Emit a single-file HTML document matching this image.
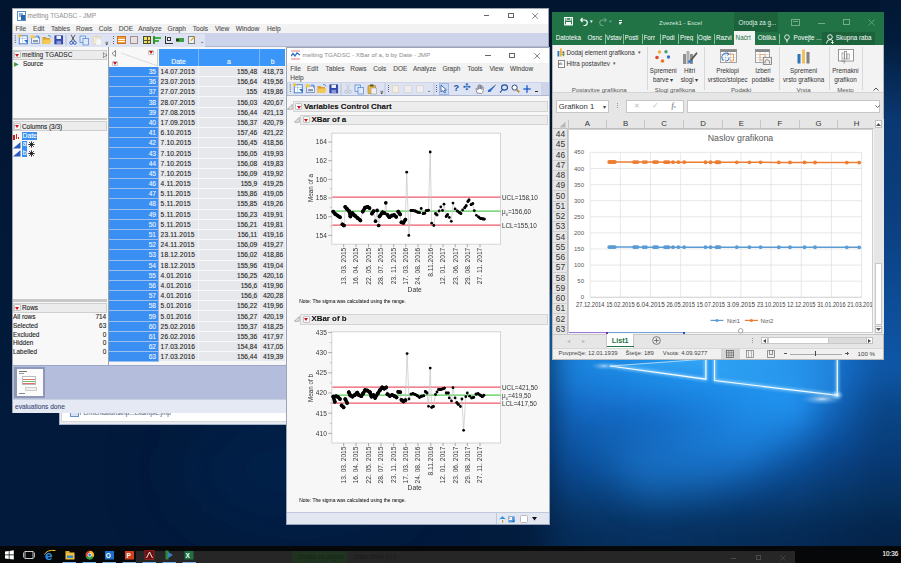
<!DOCTYPE html><html><head><meta charset="utf-8"><style>
*{box-sizing:border-box}
html,body{margin:0;padding:0;width:901px;height:563px;overflow:hidden}
body{position:relative;font-family:"Liberation Sans",sans-serif;background:#071b36}
div{line-height:1;-webkit-text-stroke:0.1px currentColor}
.ns div{-webkit-text-stroke:0}
</style></head><body><svg style="position:absolute;left:0;top:0" width="901" height="546">
<defs>
<linearGradient id="dbase" x1="0" y1="0" x2="0" y2="546" gradientUnits="userSpaceOnUse">
<stop offset="0" stop-color="#011530"/><stop offset="0.6" stop-color="#021a3a"/><stop offset="1" stop-color="#021a3c"/>
</linearGradient>
<linearGradient id="pane1" x1="0" y1="0" x2="0" y2="1"><stop offset="0" stop-color="#40b0fa"/><stop offset="1" stop-color="#2a94ec"/></linearGradient>
<linearGradient id="pane2" x1="0" y1="0" x2="1" y2="0"><stop offset="0" stop-color="#38aaf6"/><stop offset="1" stop-color="#2890e8"/></linearGradient>
<radialGradient id="flare" cx="0.5" cy="0.5" r="0.5"><stop offset="0" stop-color="#fff" stop-opacity="1"/><stop offset="0.3" stop-color="#cfeeff" stop-opacity="0.6"/><stop offset="1" stop-color="#60b8ff" stop-opacity="0"/></radialGradient>
<linearGradient id="cone" x1="842" y1="394" x2="640" y2="500" gradientUnits="userSpaceOnUse"><stop offset="0" stop-color="#2aa0ff"/><stop offset="0.4" stop-color="#1a80e0"/><stop offset="1" stop-color="#0e56a8" stop-opacity="0.6"/></linearGradient>
<filter id="blur1" x="-20%" y="-20%" width="140%" height="140%"><feGaussianBlur stdDeviation="0.6"/></filter>
<filter id="b40" x="-100%" y="-100%" width="300%" height="300%"><feGaussianBlur stdDeviation="40"/></filter>
<filter id="b20" x="-100%" y="-100%" width="300%" height="300%"><feGaussianBlur stdDeviation="18"/></filter>
<filter id="b8" x="-100%" y="-100%" width="300%" height="300%"><feGaussianBlur stdDeviation="7"/></filter>
</defs>
<rect x="0" y="0" width="901" height="546" fill="url(#dbase)"/>
<ellipse cx="300" cy="470" rx="120" ry="50" fill="#03285a" filter="url(#b40)" opacity="0.6"/>
<ellipse cx="905" cy="320" rx="40" ry="110" fill="#0e56aa" filter="url(#b20)" opacity="1"/>
</svg><div style="position:absolute;left:480px;top:290px;width:421px;height:256px;overflow:hidden"><div style="position:absolute;left:0;top:0;width:421px;height:256px;filter:blur(16px)"><div style="position:absolute;left:-19.0px;top:6.7px;width:45.0px;height:32.2px;background:#021c3e"></div><div style="position:absolute;left:25.0px;top:6.7px;width:45.0px;height:32.2px;background:#021c3e"></div><div style="position:absolute;left:69.0px;top:6.7px;width:45.0px;height:32.2px;background:#1a82dc"></div><div style="position:absolute;left:113.0px;top:6.7px;width:45.0px;height:32.2px;background:#1c8ae4"></div><div style="position:absolute;left:157.0px;top:6.7px;width:45.0px;height:32.2px;background:#1e92ec"></div><div style="position:absolute;left:201.0px;top:6.7px;width:45.0px;height:32.2px;background:#2096f0"></div><div style="position:absolute;left:245.0px;top:6.7px;width:45.0px;height:32.2px;background:#2094ee"></div><div style="position:absolute;left:289.0px;top:6.7px;width:45.0px;height:32.2px;background:#1e90ea"></div><div style="position:absolute;left:333.0px;top:6.7px;width:45.0px;height:32.2px;background:#1672cc"></div><div style="position:absolute;left:377.0px;top:6.7px;width:45.0px;height:32.2px;background:#0e56a6"></div><div style="position:absolute;left:421.0px;top:6.7px;width:45.0px;height:32.2px;background:#0e56a6"></div><div style="position:absolute;left:465.0px;top:6.7px;width:45.0px;height:32.2px;background:#0e56a6"></div><div style="position:absolute;left:-19.0px;top:37.8px;width:45.0px;height:32.2px;background:#021c3e"></div><div style="position:absolute;left:25.0px;top:37.8px;width:45.0px;height:32.2px;background:#021c3e"></div><div style="position:absolute;left:69.0px;top:37.8px;width:45.0px;height:32.2px;background:#1a82dc"></div><div style="position:absolute;left:113.0px;top:37.8px;width:45.0px;height:32.2px;background:#1c8ae4"></div><div style="position:absolute;left:157.0px;top:37.8px;width:45.0px;height:32.2px;background:#1e92ec"></div><div style="position:absolute;left:201.0px;top:37.8px;width:45.0px;height:32.2px;background:#2096f0"></div><div style="position:absolute;left:245.0px;top:37.8px;width:45.0px;height:32.2px;background:#2094ee"></div><div style="position:absolute;left:289.0px;top:37.8px;width:45.0px;height:32.2px;background:#1e90ea"></div><div style="position:absolute;left:333.0px;top:37.8px;width:45.0px;height:32.2px;background:#1672cc"></div><div style="position:absolute;left:377.0px;top:37.8px;width:45.0px;height:32.2px;background:#0e56a6"></div><div style="position:absolute;left:421.0px;top:37.8px;width:45.0px;height:32.2px;background:#0e56a6"></div><div style="position:absolute;left:465.0px;top:37.8px;width:45.0px;height:32.2px;background:#0e56a6"></div><div style="position:absolute;left:-19.0px;top:69.0px;width:45.0px;height:32.2px;background:#021c3e"></div><div style="position:absolute;left:25.0px;top:69.0px;width:45.0px;height:32.2px;background:#021c3e"></div><div style="position:absolute;left:69.0px;top:69.0px;width:45.0px;height:32.2px;background:#1a82dc"></div><div style="position:absolute;left:113.0px;top:69.0px;width:45.0px;height:32.2px;background:#1c8ae4"></div><div style="position:absolute;left:157.0px;top:69.0px;width:45.0px;height:32.2px;background:#1e92ec"></div><div style="position:absolute;left:201.0px;top:69.0px;width:45.0px;height:32.2px;background:#2096f0"></div><div style="position:absolute;left:245.0px;top:69.0px;width:45.0px;height:32.2px;background:#2094ee"></div><div style="position:absolute;left:289.0px;top:69.0px;width:45.0px;height:32.2px;background:#1e90ea"></div><div style="position:absolute;left:333.0px;top:69.0px;width:45.0px;height:32.2px;background:#1672cc"></div><div style="position:absolute;left:377.0px;top:69.0px;width:45.0px;height:32.2px;background:#0e56a6"></div><div style="position:absolute;left:421.0px;top:69.0px;width:45.0px;height:32.2px;background:#0e56a6"></div><div style="position:absolute;left:465.0px;top:69.0px;width:45.0px;height:32.2px;background:#0e56a6"></div><div style="position:absolute;left:-19.0px;top:100.2px;width:45.0px;height:32.2px;background:#021c3e"></div><div style="position:absolute;left:25.0px;top:100.2px;width:45.0px;height:32.2px;background:#021c3e"></div><div style="position:absolute;left:69.0px;top:100.2px;width:45.0px;height:32.2px;background:#1368c4"></div><div style="position:absolute;left:113.0px;top:100.2px;width:45.0px;height:32.2px;background:#156ecc"></div><div style="position:absolute;left:157.0px;top:100.2px;width:45.0px;height:32.2px;background:#1776d4"></div><div style="position:absolute;left:201.0px;top:100.2px;width:45.0px;height:32.2px;background:#1a80de"></div><div style="position:absolute;left:245.0px;top:100.2px;width:45.0px;height:32.2px;background:#1e8eea"></div><div style="position:absolute;left:289.0px;top:100.2px;width:45.0px;height:32.2px;background:#2298f6"></div><div style="position:absolute;left:333.0px;top:100.2px;width:45.0px;height:32.2px;background:#1262b8"></div><div style="position:absolute;left:377.0px;top:100.2px;width:45.0px;height:32.2px;background:#0a4686"></div><div style="position:absolute;left:421.0px;top:100.2px;width:45.0px;height:32.2px;background:#0a4686"></div><div style="position:absolute;left:465.0px;top:100.2px;width:45.0px;height:32.2px;background:#0a4686"></div><div style="position:absolute;left:-19.0px;top:131.3px;width:45.0px;height:32.2px;background:#021c3e"></div><div style="position:absolute;left:25.0px;top:131.3px;width:45.0px;height:32.2px;background:#021c3e"></div><div style="position:absolute;left:69.0px;top:131.3px;width:45.0px;height:32.2px;background:#0f5aaa"></div><div style="position:absolute;left:113.0px;top:131.3px;width:45.0px;height:32.2px;background:#105eb0"></div><div style="position:absolute;left:157.0px;top:131.3px;width:45.0px;height:32.2px;background:#1264b8"></div><div style="position:absolute;left:201.0px;top:131.3px;width:45.0px;height:32.2px;background:#146ec6"></div><div style="position:absolute;left:245.0px;top:131.3px;width:45.0px;height:32.2px;background:#1678d2"></div><div style="position:absolute;left:289.0px;top:131.3px;width:45.0px;height:32.2px;background:#126ac0"></div><div style="position:absolute;left:333.0px;top:131.3px;width:45.0px;height:32.2px;background:#0c52a0"></div><div style="position:absolute;left:377.0px;top:131.3px;width:45.0px;height:32.2px;background:#09407e"></div><div style="position:absolute;left:421.0px;top:131.3px;width:45.0px;height:32.2px;background:#09407e"></div><div style="position:absolute;left:465.0px;top:131.3px;width:45.0px;height:32.2px;background:#09407e"></div><div style="position:absolute;left:-19.0px;top:162.5px;width:45.0px;height:32.2px;background:#021c3e"></div><div style="position:absolute;left:25.0px;top:162.5px;width:45.0px;height:32.2px;background:#021c3e"></div><div style="position:absolute;left:69.0px;top:162.5px;width:45.0px;height:32.2px;background:#0b4c96"></div><div style="position:absolute;left:113.0px;top:162.5px;width:45.0px;height:32.2px;background:#0c509c"></div><div style="position:absolute;left:157.0px;top:162.5px;width:45.0px;height:32.2px;background:#0d54a2"></div><div style="position:absolute;left:201.0px;top:162.5px;width:45.0px;height:32.2px;background:#0e58a8"></div><div style="position:absolute;left:245.0px;top:162.5px;width:45.0px;height:32.2px;background:#0e56a6"></div><div style="position:absolute;left:289.0px;top:162.5px;width:45.0px;height:32.2px;background:#0c4e98"></div><div style="position:absolute;left:333.0px;top:162.5px;width:45.0px;height:32.2px;background:#093f80"></div><div style="position:absolute;left:377.0px;top:162.5px;width:45.0px;height:32.2px;background:#073670"></div><div style="position:absolute;left:421.0px;top:162.5px;width:45.0px;height:32.2px;background:#073670"></div><div style="position:absolute;left:465.0px;top:162.5px;width:45.0px;height:32.2px;background:#073670"></div><div style="position:absolute;left:-19.0px;top:193.7px;width:45.0px;height:32.2px;background:#021c3e"></div><div style="position:absolute;left:25.0px;top:193.7px;width:45.0px;height:32.2px;background:#021c3e"></div><div style="position:absolute;left:69.0px;top:193.7px;width:45.0px;height:32.2px;background:#083c74"></div><div style="position:absolute;left:113.0px;top:193.7px;width:45.0px;height:32.2px;background:#09407a"></div><div style="position:absolute;left:157.0px;top:193.7px;width:45.0px;height:32.2px;background:#0a4480"></div><div style="position:absolute;left:201.0px;top:193.7px;width:45.0px;height:32.2px;background:#0a4480"></div><div style="position:absolute;left:245.0px;top:193.7px;width:45.0px;height:32.2px;background:#09407a"></div><div style="position:absolute;left:289.0px;top:193.7px;width:45.0px;height:32.2px;background:#083c74"></div><div style="position:absolute;left:333.0px;top:193.7px;width:45.0px;height:32.2px;background:#063666"></div><div style="position:absolute;left:377.0px;top:193.7px;width:45.0px;height:32.2px;background:#05305c"></div><div style="position:absolute;left:421.0px;top:193.7px;width:45.0px;height:32.2px;background:#05305c"></div><div style="position:absolute;left:465.0px;top:193.7px;width:45.0px;height:32.2px;background:#05305c"></div><div style="position:absolute;left:-19.0px;top:224.8px;width:45.0px;height:32.2px;background:#021c3e"></div><div style="position:absolute;left:25.0px;top:224.8px;width:45.0px;height:32.2px;background:#021c3e"></div><div style="position:absolute;left:69.0px;top:224.8px;width:45.0px;height:32.2px;background:#052c58"></div><div style="position:absolute;left:113.0px;top:224.8px;width:45.0px;height:32.2px;background:#062e5c"></div><div style="position:absolute;left:157.0px;top:224.8px;width:45.0px;height:32.2px;background:#06305e"></div><div style="position:absolute;left:201.0px;top:224.8px;width:45.0px;height:32.2px;background:#062e5c"></div><div style="position:absolute;left:245.0px;top:224.8px;width:45.0px;height:32.2px;background:#052c58"></div><div style="position:absolute;left:289.0px;top:224.8px;width:45.0px;height:32.2px;background:#052a54"></div><div style="position:absolute;left:333.0px;top:224.8px;width:45.0px;height:32.2px;background:#042650"></div><div style="position:absolute;left:377.0px;top:224.8px;width:45.0px;height:32.2px;background:#04234a"></div><div style="position:absolute;left:421.0px;top:224.8px;width:45.0px;height:32.2px;background:#04234a"></div><div style="position:absolute;left:465.0px;top:224.8px;width:45.0px;height:32.2px;background:#04234a"></div><div style="position:absolute;left:-19.0px;top:256.0px;width:45.0px;height:32.2px;background:#021c3e"></div><div style="position:absolute;left:25.0px;top:256.0px;width:45.0px;height:32.2px;background:#021c3e"></div><div style="position:absolute;left:69.0px;top:256.0px;width:45.0px;height:32.2px;background:#052c58"></div><div style="position:absolute;left:113.0px;top:256.0px;width:45.0px;height:32.2px;background:#062e5c"></div><div style="position:absolute;left:157.0px;top:256.0px;width:45.0px;height:32.2px;background:#06305e"></div><div style="position:absolute;left:201.0px;top:256.0px;width:45.0px;height:32.2px;background:#062e5c"></div><div style="position:absolute;left:245.0px;top:256.0px;width:45.0px;height:32.2px;background:#052c58"></div><div style="position:absolute;left:289.0px;top:256.0px;width:45.0px;height:32.2px;background:#052a54"></div><div style="position:absolute;left:333.0px;top:256.0px;width:45.0px;height:32.2px;background:#042650"></div><div style="position:absolute;left:377.0px;top:256.0px;width:45.0px;height:32.2px;background:#04234a"></div><div style="position:absolute;left:421.0px;top:256.0px;width:45.0px;height:32.2px;background:#04234a"></div><div style="position:absolute;left:465.0px;top:256.0px;width:45.0px;height:32.2px;background:#04234a"></div><div style="position:absolute;left:-19.0px;top:287.2px;width:45.0px;height:32.2px;background:#021c3e"></div><div style="position:absolute;left:25.0px;top:287.2px;width:45.0px;height:32.2px;background:#021c3e"></div><div style="position:absolute;left:69.0px;top:287.2px;width:45.0px;height:32.2px;background:#052c58"></div><div style="position:absolute;left:113.0px;top:287.2px;width:45.0px;height:32.2px;background:#062e5c"></div><div style="position:absolute;left:157.0px;top:287.2px;width:45.0px;height:32.2px;background:#06305e"></div><div style="position:absolute;left:201.0px;top:287.2px;width:45.0px;height:32.2px;background:#062e5c"></div><div style="position:absolute;left:245.0px;top:287.2px;width:45.0px;height:32.2px;background:#052c58"></div><div style="position:absolute;left:289.0px;top:287.2px;width:45.0px;height:32.2px;background:#052a54"></div><div style="position:absolute;left:333.0px;top:287.2px;width:45.0px;height:32.2px;background:#042650"></div><div style="position:absolute;left:377.0px;top:287.2px;width:45.0px;height:32.2px;background:#04234a"></div><div style="position:absolute;left:421.0px;top:287.2px;width:45.0px;height:32.2px;background:#04234a"></div><div style="position:absolute;left:465.0px;top:287.2px;width:45.0px;height:32.2px;background:#04234a"></div></div></div><svg style="position:absolute;left:0;top:0" width="901" height="546">
<defs>
<linearGradient id="pane1" x1="0" y1="0" x2="0" y2="1"><stop offset="0" stop-color="#40b0fa"/><stop offset="1" stop-color="#2a94ec"/></linearGradient>
<linearGradient id="pane2" x1="0" y1="0" x2="1" y2="0"><stop offset="0" stop-color="#38aaf6"/><stop offset="1" stop-color="#2890e8"/></linearGradient>
<radialGradient id="flare" cx="0.5" cy="0.5" r="0.5"><stop offset="0" stop-color="#fff" stop-opacity="1"/><stop offset="0.3" stop-color="#cfeeff" stop-opacity="0.6"/><stop offset="1" stop-color="#60b8ff" stop-opacity="0"/></radialGradient>
<filter id="b3b" x="-20%" y="-20%" width="140%" height="140%"><feGaussianBlur stdDeviation="1.5"/></filter>
<filter id="blur1b" x="-20%" y="-20%" width="140%" height="140%"><feGaussianBlur stdDeviation="0.6"/></filter>
<filter id="b20b" x="-100%" y="-100%" width="300%" height="300%"><feGaussianBlur stdDeviation="18"/></filter>
</defs>
<polygon points="842,394 600,450 640,500 740,480" fill="#2a9af8" filter="url(#b20b)" opacity="0.35"/>
<polygon points="610,366 706,359 706,379.2" fill="url(#pane1)" opacity="0.6"/>
<polygon points="714.5,359 837.3,359 837.3,395.4 714.5,380.5" fill="url(#pane2)" opacity="0.55"/>
<g filter="url(#b3b)" stroke="#9ad8ff" fill="none" opacity="0.7">
<polyline points="610,366 705.9,379.2 705.9,359" stroke-width="3.5"/>
<polyline points="714.5,359 714.5,380.5 837.3,395.4 837.3,359" stroke-width="3.5"/>
</g>
<g filter="url(#blur1b)" stroke="#f4fbff" fill="none">
<polyline points="610,366 705.9,379.2 705.9,359" stroke-width="1.2"/>
<line x1="610" y1="366" x2="700" y2="359.5" stroke-width="0.8" opacity="0.8"/>
<polyline points="714.5,359 714.5,380.5 837.3,395.4 837.3,359" stroke-width="1.2"/>
</g>
<ellipse cx="822" cy="399" rx="22" ry="6" fill="url(#flare)" opacity="0.75"/>
<ellipse cx="837" cy="395" rx="7" ry="5" fill="url(#flare)"/>
<ellipse cx="604" cy="366" rx="14" ry="4.5" fill="url(#flare)" opacity="0.6"/>
</svg><div style="position:absolute;left:880px;top:0px;width:21px;height:362px;background:linear-gradient(to bottom,#021834 0px,#031c3c 40px,#0a3872 120px,#0b3f80 220px,#0d4c96 300px,#0e56a6 362px)"></div><div style="position:absolute;left:0px;top:546px;width:901px;height:17px;background:#060708"></div><div style="position:absolute;left:135.5px;top:551px;width:659.5px;height:12px;background:#262626"></div><div style="position:absolute;left:292px;top:551px;width:55px;height:12px;background:#1f3320"></div><div style="position:absolute;left:297px;top:554.3px;white-space:nowrap;font-size:6.3px;color:#172a18">Orodja za pogon</div><div style="position:absolute;left:354px;top:553.8px;white-space:nowrap;font-size:6.5px;color:#1c1c1c">User drive (U:)</div><div style="position:absolute;left:730.5px;top:557.5px;width:5.5px;height:0.7px;background:#4a4a4a"></div><div style="position:absolute;left:755.5px;top:554.5px;width:5.5px;height:5.5px;border:0.7px solid #4a4a4a"></div><svg style="position:absolute;left:780px;top:554.5px" width="6" height="6"><path d="M0.3 0.3 L5.7 5.7 M5.7 0.3 L0.3 5.7" stroke="#4a4a4a" stroke-width="0.7"/></svg><div style="position:absolute;left:796px;top:553px;white-space:nowrap;"></div><div style="position:absolute;left:882.5px;top:551.3px;white-space:nowrap;color:#fff;font-size:6.3px">10:36</div><svg style="position:absolute;left:0;top:546px" width="220" height="17"><g fill="#fff"><polygon points="5,5.6 8.8,5 8.8,8.6 5,8.6"/><polygon points="9.5,4.9 13.8,4.2 13.8,8.6 9.5,8.6"/><polygon points="5,9.3 8.8,9.3 8.8,12.9 5,12.4"/><polygon points="9.5,9.3 13.8,9.3 13.8,13.6 9.5,13"/></g><rect x="25" y="5.5" width="8" height="7" fill="none" stroke="#ddd" stroke-width="0.9"/><line x1="23.5" y1="6.5" x2="23.5" y2="11.5" stroke="#ddd" stroke-width="0.8"/><line x1="34.5" y1="6.5" x2="34.5" y2="11.5" stroke="#ddd" stroke-width="0.8"/><text x="45" y="14" font-size="13.5" font-weight="bold" fill="#2a8ee8" font-family="Liberation Sans">e</text><path d="M44.5 8.5 Q47 3.5 55.5 4.5" fill="none" stroke="#f0c030" stroke-width="1"/><rect x="65.5" y="6.5" width="9" height="7" fill="#f0c040"/><rect x="65.5" y="5" width="4" height="2" fill="#e0a820"/><rect x="67" y="9.5" width="6" height="2.5" fill="#3a8ad0"/><circle cx="89.7" cy="9" r="4.2" fill="#e04030"/><path d="M89.7 9 L85.8 11 A4.2 4.2 0 0 0 93.6 11 Z" fill="#30a040"/><path d="M89.7 9 L93.6 11 A4.2 4.2 0 0 0 89.7 4.8 Z" fill="#f0c020"/><circle cx="89.7" cy="9" r="1.8" fill="#3a80e0" stroke="#fff" stroke-width="0.7"/><rect x="105" y="5" width="9" height="8.5" fill="#1a70c8"/><text x="105.8" y="12" font-size="6.5" font-weight="bold" fill="#fff" font-family="Liberation Sans">O</text><rect x="125" y="5" width="9" height="8.5" fill="#d04020"/><text x="126.5" y="12" font-size="6.5" font-weight="bold" fill="#fff" font-family="Liberation Sans">P</text><rect x="145" y="4.5" width="9" height="9" fill="#6a1010" stroke="#c02020" stroke-width="0.6"/><path d="M146.5 12 L149.5 6 L152.5 12" fill="none" stroke="#fff" stroke-width="0.9"/><rect x="165.5" y="4.5" width="3" height="9" fill="#2a8a40"/><polygon points="168,6 173,9 168,12" fill="#3a80c0"/><rect x="184.5" y="5" width="9" height="8.5" fill="#1e7145"/><text x="185.5" y="12" font-size="6.5" font-weight="bold" fill="#fff" font-family="Liberation Sans">X</text><rect x="62.5" y="16" width="13.5" height="1" fill="#7ab4e8"/><rect x="82.5" y="16" width="13.5" height="1" fill="#7ab4e8"/><rect x="102.5" y="16" width="13.5" height="1" fill="#7ab4e8"/><rect x="122.5" y="16" width="13.5" height="1" fill="#7ab4e8"/><rect x="142.5" y="16" width="13.5" height="1" fill="#7ab4e8"/><rect x="162.5" y="16" width="13.5" height="1" fill="#7ab4e8"/><rect x="182.5" y="16" width="13.5" height="1" fill="#7ab4e8"/></svg><div style="position:absolute;left:59px;top:380px;width:240px;height:45px;background:#e8ecf2;border:0.8px solid #a8b4c8"></div><div style="position:absolute;left:61px;top:380px;width:226px;height:42.3px;background:#fff;border:0.7px solid #d8d8d8"></div><div style="position:absolute;left:69.6px;top:410px;width:9px;height:6.5px;background:#d8e4f4;border:0.7px solid #6a90c8"></div><div style="position:absolute;left:79.5px;top:410px;white-space:nowrap;font-size:6.4px;color:#5a6a88">Fermentationstrip...example.jmp</div><div style="position:absolute;left:12px;top:8px;width:537px;height:405.3px;background:#f5f5f5;border:1px solid #a0a6b0"></div><div style="position:absolute;left:13px;top:9px;width:535px;height:16px;background:#ffffff"></div><div style="position:absolute;left:16.5px;top:11px;width:9px;height:10px;background:#fff;border:1px solid #5a8fc8"><div style="position:absolute;left:1px;top:1px;width:4px;height:4px;background:#8ab4e0"></div><div style="position:absolute;left:3px;top:3px;width:4px;height:5px;background:#2a66b0"></div></div><div style="position:absolute;left:27.5px;top:12.6px;white-space:nowrap;font-size:6.5px;color:#9a9a9a">melting TGADSC - JMP</div><div style="position:absolute;left:483.8px;top:15.3px;width:5.4px;height:0.8px;background:#666"></div><div style="position:absolute;left:507.8px;top:12.8px;width:6px;height:5.6px;border:0.8px solid #666"></div><svg style="position:absolute;left:532.3px;top:12.8px" width="6.2" height="6"><path d="M0.3 0.3 L5.9 5.7 M5.9 0.3 L0.3 5.7" stroke="#666" stroke-width="0.8"/></svg><div style="position:absolute;left:13px;top:24px;width:535px;height:9px;background:#f2f2f2"></div><div style="position:absolute;left:15.5px;top:25.8px;white-space:nowrap;font-size:6.6px;color:#505050">File</div><div style="position:absolute;left:33px;top:25.8px;white-space:nowrap;font-size:6.6px;color:#505050">Edit</div><div style="position:absolute;left:51px;top:25.8px;white-space:nowrap;font-size:6.6px;color:#505050">Tables</div><div style="position:absolute;left:76px;top:25.8px;white-space:nowrap;font-size:6.6px;color:#505050">Rows</div><div style="position:absolute;left:98.8px;top:25.8px;white-space:nowrap;font-size:6.6px;color:#505050">Cols</div><div style="position:absolute;left:118.8px;top:25.8px;white-space:nowrap;font-size:6.6px;color:#505050">DOE</div><div style="position:absolute;left:138.3px;top:25.8px;white-space:nowrap;font-size:6.6px;color:#505050">Analyze</div><div style="position:absolute;left:167.6px;top:25.8px;white-space:nowrap;font-size:6.6px;color:#505050">Graph</div><div style="position:absolute;left:192.7px;top:25.8px;white-space:nowrap;font-size:6.6px;color:#505050">Tools</div><div style="position:absolute;left:215px;top:25.8px;white-space:nowrap;font-size:6.6px;color:#505050">View</div><div style="position:absolute;left:235.8px;top:25.8px;white-space:nowrap;font-size:6.6px;color:#505050">Window</div><div style="position:absolute;left:267px;top:25.8px;white-space:nowrap;font-size:6.6px;color:#505050">Help</div><div style="position:absolute;left:13px;top:33px;width:535px;height:14px;background:#cdd4ea;border-bottom:1px solid #b0b8d0"></div><div style="position:absolute;left:13px;top:33.5px;width:191.5px;height:13px;background:#dde3f2"></div><svg style="position:absolute;left:12px;top:32px" width="100" height="16"><rect x="2.8" y="3.3" width="1" height="1" fill="#505868"/><rect x="2.8" y="5.5" width="1" height="1" fill="#505868"/><rect x="2.8" y="7.7" width="1" height="1" fill="#505868"/><rect x="2.8" y="9.9" width="1" height="1" fill="#505868"/><rect x="7.3" y="3.8" width="8" height="8" fill="#fff" stroke="#3a78c8" stroke-width="0.9"/><line x1="7.3" y1="6.5" x2="15.3" y2="6.5" stroke="#8ab0e0" stroke-width="0.5"/><line x1="10.5" y1="3.8" x2="10.5" y2="11.8" stroke="#8ab0e0" stroke-width="0.5"/><circle cx="7.8" cy="3.8" r="1.6" fill="#f0c030"/><polygon points="12,8 15.8,8 15.8,11.8" fill="#2a70c8"/><rect x="19.5" y="5" width="8" height="6.5" fill="#eef2f8" stroke="#6a8ab8" stroke-width="0.8"/><rect x="18.5" y="3.3" width="4" height="3" fill="#f0c850"/><rect x="21" y="8" width="5" height="2.2" fill="#8898b0"/><path d="M24 4 L26.5 4 L26.5 6.5" fill="none" stroke="#2a8ad8" stroke-width="0.8"/><path d="M30.5 5 L33.5 5 L34.5 6 L38 6 L38 12 L30.5 12 Z" fill="#d8a030"/><path d="M31.5 7.5 L39.5 7.5 L38 12 L30.5 12 Z" fill="#f5c850"/><path d="M36 3.5 Q38.5 3 39 5.5" fill="none" stroke="#3a78c8" stroke-width="0.7"/><rect x="42.8" y="3.8" width="8" height="8.2" fill="#3048b0" stroke="#202c80" stroke-width="0.5"/><rect x="44.5" y="3.8" width="4.5" height="3.2" fill="#e8eef8"/><rect x="44.5" y="8.8" width="4.6" height="3.2" fill="#8a98d8"/><line x1="54" y1="2.5" x2="54" y2="13.5" stroke="#a8b0c4" stroke-width="0.8"/><line x1="59" y1="2.8" x2="62.5" y2="9" stroke="#333" stroke-width="0.8"/><line x1="63" y1="2.8" x2="59.5" y2="9" stroke="#333" stroke-width="0.8"/><circle cx="59.2" cy="10.8" r="1.5" fill="none" stroke="#2a58b8" stroke-width="0.9"/><circle cx="62.8" cy="10.8" r="1.5" fill="none" stroke="#2a58b8" stroke-width="0.9"/><rect x="68" y="4" width="5.5" height="6.5" fill="#dfe9f8" stroke="#4a80d0" stroke-width="0.7"/><rect x="71" y="6.5" width="5.5" height="6.5" fill="#dfe9f8" stroke="#4a80d0" stroke-width="0.7"/><rect x="81" y="4.5" width="7.5" height="8" rx="0.6" fill="#f2ead8" stroke="#d8ccb0" stroke-width="0.6"/><rect x="83" y="3.5" width="3.5" height="2" fill="#e0d8c4"/><rect x="84" y="7" width="5.5" height="6" fill="#f8f8f8" stroke="#dcdcdc" stroke-width="0.5"/><line x1="93.3" y1="10.3" x2="96.3" y2="10.3" stroke="#333" stroke-width="0.6"/><polygon points="93.3,11.5 96.3,11.5 94.8,13.3" fill="#333"/></svg><div style="position:absolute;left:113px;top:36.0px;width:1px;height:1px;background:#5a6070"></div><div style="position:absolute;left:113px;top:38.3px;width:1px;height:1px;background:#5a6070"></div><div style="position:absolute;left:113px;top:40.6px;width:1px;height:1px;background:#5a6070"></div><div style="position:absolute;left:113px;top:42.9px;width:1px;height:1px;background:#5a6070"></div><div style="position:absolute;left:117px;top:36px;width:9px;height:8px;background:#f4a040;border:1px solid #d07020"></div><div style="position:absolute;left:118px;top:38.5px;width:7px;height:1px;background:#fff;"></div><div style="position:absolute;left:118px;top:40.5px;width:7px;height:1px;background:#fff;"></div><div style="position:absolute;left:130px;top:36px;width:8px;height:8px;background:#e8e0e0;border:1px solid #a09090"></div><div style="position:absolute;left:143px;top:36px;width:8px;height:8px;background:#f0e060;border:1px solid #505030"></div><div style="position:absolute;left:146.5px;top:36px;width:1px;height:8px;background:#505030;"></div><div style="position:absolute;left:143px;top:39.5px;width:8px;height:1px;background:#505030;"></div><div style="position:absolute;left:153px;top:36px;width:2px;height:8px;background:#3a9030;"></div><div style="position:absolute;left:155px;top:37px;width:6px;height:2px;background:#40b040;"></div><div style="position:absolute;left:155px;top:40px;width:4px;height:2px;background:#40b040;"></div><div style="position:absolute;left:165px;top:35.5px;width:1px;height:8px;background:#333;"></div><div style="position:absolute;left:165px;top:43px;width:8px;height:1px;background:#333;"></div><div style="position:absolute;left:167px;top:37px;width:4px;height:4px;background:#fff;border:1px solid #333"></div><div style="position:absolute;left:176px;top:37.5px;width:8px;height:4px;background:#40a040;"></div><div style="position:absolute;left:176px;top:38.5px;width:3px;height:2px;background:#333;"></div><div style="position:absolute;left:188px;top:36px;width:7px;height:8px;background:#f0f0f0;border:1px solid #808080"></div><div style="position:absolute;left:190px;top:38px;width:6px;height:1.2px;background:#e0a020;transform:rotate(-45deg)"></div><div style="position:absolute;left:200px;top:39px;white-space:nowrap;font-size:5px;color:#333">&#x2304;</div><div style="position:absolute;left:13px;top:47px;width:95px;height:318px;background:#f8f8f8"></div><div style="position:absolute;left:107.5px;top:47px;width:1.2px;height:318px;background:#a0a0a0"></div><div style="position:absolute;left:13px;top:49.5px;width:94px;height:10.5px;background:#ececec;border:0.7px solid #cfcfcf"></div><div style="position:absolute;left:13.8px;top:51.3px;width:7px;height:7px;background:#fbfbfb;border:0.6px solid #c4c4c4;border-radius:1px"><div style="position:absolute;left:0.3999999999999999px;top:1.5px;width:0;height:0;border-left:2.6px solid transparent;border-right:2.6px solid transparent;border-top:3.1px solid #d0101a"></div></div><div style="position:absolute;left:22px;top:51.8px;white-space:nowrap;font-size:6.6px;color:#222;-webkit-text-stroke:0.05px #222">melting TGADSC</div><div style="position:absolute;left:102.2px;top:50.8px;white-space:nowrap;font-size:7.2px;color:#444;transform:scaleX(0.8)">&#x25B7;</div><div style="position:absolute;left:14px;top:60.8px;white-space:nowrap;font-size:6.2px;color:#3a9a3a">&#x25B6;</div><div style="position:absolute;left:23px;top:61.4px;white-space:nowrap;font-size:6.4px;color:#222">Source</div><div style="position:absolute;left:13px;top:118.3px;width:94px;height:2.2px;background:#c8c8c8"></div><div style="position:absolute;left:13px;top:120.5px;width:94px;height:10.6px;background:#ececec;border:0.7px solid #cfcfcf"></div><div style="position:absolute;left:13.8px;top:122.5px;width:7px;height:7px;background:#fbfbfb;border:0.6px solid #c4c4c4;border-radius:1px"><div style="position:absolute;left:0.3999999999999999px;top:1.5px;width:0;height:0;border-left:2.6px solid transparent;border-right:2.6px solid transparent;border-top:3.1px solid #d0101a"></div></div><div style="position:absolute;left:22px;top:123.5px;white-space:nowrap;font-size:6.4px;color:#222">Columns (3/3)</div><div style="position:absolute;left:13.3px;top:135px;width:1.7px;height:4.5px;background:#d42020"></div><div style="position:absolute;left:15.5px;top:133.6px;width:1.7px;height:5.9px;background:#d42020"></div><div style="position:absolute;left:17.7px;top:137.4px;width:1.7px;height:2.1px;background:#d42020"></div><div style="position:absolute;left:22px;top:132.4px;width:14.6px;height:7.6px;background:#3a8ef0"></div><div style="position:absolute;left:22.6px;top:133.2px;white-space:nowrap;font-size:6.7px;color:#fff">Date</div><svg style="position:absolute;left:13px;top:141.6px" width="8" height="7"><polygon points="0,6.5 7.5,0 7.5,6.5" fill="#2a5cc0"/></svg><div style="position:absolute;left:22px;top:140.6px;width:5px;height:8px;background:#3a8ef0"></div><div style="position:absolute;left:22.8px;top:141.4px;white-space:nowrap;font-size:6.7px;color:#fff">a</div><svg style="position:absolute;left:28px;top:141.4px" width="7" height="7"><g stroke="#111" stroke-width="0.85"><line x1="3.5" y1="0.3" x2="3.5" y2="6.7"/><line x1="0.3" y1="3.5" x2="6.7" y2="3.5"/><line x1="1.2" y1="1.2" x2="5.8" y2="5.8"/><line x1="5.8" y1="1.2" x2="1.2" y2="5.8"/></g></svg><svg style="position:absolute;left:13px;top:149.8px" width="8" height="7"><polygon points="0,6.5 7.5,0 7.5,6.5" fill="#2a5cc0"/></svg><div style="position:absolute;left:22px;top:148.8px;width:5px;height:8px;background:#3a8ef0"></div><div style="position:absolute;left:22.8px;top:149.60000000000002px;white-space:nowrap;font-size:6.7px;color:#fff">b</div><svg style="position:absolute;left:28px;top:149.60000000000002px" width="7" height="7"><g stroke="#111" stroke-width="0.85"><line x1="3.5" y1="0.3" x2="3.5" y2="6.7"/><line x1="0.3" y1="3.5" x2="6.7" y2="3.5"/><line x1="1.2" y1="1.2" x2="5.8" y2="5.8"/><line x1="5.8" y1="1.2" x2="1.2" y2="5.8"/></g></svg><div style="position:absolute;left:13px;top:298.8px;width:94px;height:3.7px;background:#c8c8c8"></div><div style="position:absolute;left:13px;top:302.5px;width:94px;height:10.2px;background:#ececec;border:0.7px solid #cfcfcf"></div><div style="position:absolute;left:13.8px;top:304px;width:7px;height:7px;background:#fbfbfb;border:0.6px solid #c4c4c4;border-radius:1px"><div style="position:absolute;left:0.3999999999999999px;top:1.5px;width:0;height:0;border-left:2.6px solid transparent;border-right:2.6px solid transparent;border-top:3.1px solid #d0101a"></div></div><div style="position:absolute;left:22px;top:305.2px;white-space:nowrap;font-size:6.4px;color:#222">Rows</div><div style="position:absolute;left:13px;top:314.4px;white-space:nowrap;font-size:6.4px;color:#222">All rows</div><div style="position:absolute;left:80px;top:314.4px;white-space:nowrap;font-size:6.4px;color:#222;width:26.2px;text-align:right">714</div><div style="position:absolute;left:13px;top:323.0px;white-space:nowrap;font-size:6.4px;color:#222">Selected</div><div style="position:absolute;left:80px;top:323.0px;white-space:nowrap;font-size:6.4px;color:#222;width:26.2px;text-align:right">63</div><div style="position:absolute;left:13px;top:331.59999999999997px;white-space:nowrap;font-size:6.4px;color:#222">Excluded</div><div style="position:absolute;left:80px;top:331.59999999999997px;white-space:nowrap;font-size:6.4px;color:#222;width:26.2px;text-align:right">0</div><div style="position:absolute;left:13px;top:340.2px;white-space:nowrap;font-size:6.4px;color:#222">Hidden</div><div style="position:absolute;left:80px;top:340.2px;white-space:nowrap;font-size:6.4px;color:#222;width:26.2px;text-align:right">0</div><div style="position:absolute;left:13px;top:348.79999999999995px;white-space:nowrap;font-size:6.4px;color:#222">Labelled</div><div style="position:absolute;left:80px;top:348.79999999999995px;white-space:nowrap;font-size:6.4px;color:#222;width:26.2px;text-align:right">0</div><div style="position:absolute;left:108.7px;top:47px;width:178.3px;height:318px;background:#f6f6f6"></div><div style="position:absolute;left:108.7px;top:48.9px;width:49.7px;height:17.2px;background:#f8f8f8;border-right:0.7px solid #ccc"></div><svg style="position:absolute;left:108.7px;top:48.9px" width="50" height="18"><line x1="12" y1="4" x2="49" y2="17" stroke="#c8c8c8" stroke-width="0.6"/><polygon points="6.5,1.5 3,4.5 6.5,7.5" fill="#fff" stroke="#555" stroke-width="0.7"/></svg><div style="position:absolute;left:111.8px;top:60.5px;width:6.5px;height:5.5px;background:#fbfbfb;border:0.6px solid #c4c4c4;border-radius:1px"><div style="position:absolute;left:0.1499999999999999px;top:0.75px;width:0;height:0;border-left:2.6px solid transparent;border-right:2.6px solid transparent;border-top:3.1px solid #d0101a"></div></div><div style="position:absolute;left:147.5px;top:49.5px;width:6.5px;height:5.5px;background:#fbfbfb;border:0.6px solid #c4c4c4;border-radius:1px"><div style="position:absolute;left:0.1499999999999999px;top:0.75px;width:0;height:0;border-left:2.6px solid transparent;border-right:2.6px solid transparent;border-top:3.1px solid #d0101a"></div></div><div style="position:absolute;left:158.8px;top:48.9px;width:126.7px;height:17.2px;background:#3a96f8"></div><div style="position:absolute;left:198.1px;top:48.9px;width:0.6px;height:17.2px;background:#7ab8ff"></div><div style="position:absolute;left:259.2px;top:48.9px;width:0.6px;height:17.2px;background:#7ab8ff"></div><div style="position:absolute;left:158.8px;top:59px;white-space:nowrap;font-size:6.9px;color:#fff;width:39.3px;text-align:center">Date</div><div style="position:absolute;left:198.7px;top:59px;white-space:nowrap;font-size:6.9px;color:#fff;width:60.5px;text-align:center">a</div><div style="position:absolute;left:259.8px;top:59px;white-space:nowrap;font-size:6.9px;color:#fff;width:25.7px;text-align:center">b</div><div style="position:absolute;left:108.7px;top:66.5px;width:49.7px;height:294.51px;background:#3b8ff2"></div><div style="position:absolute;left:158.8px;top:66.5px;width:126.7px;height:294.51px;background:#e6e8ec"></div><div style="position:absolute;left:108.7px;top:76px;width:49.7px;height:1px;background:#9cc0ee"></div><div style="position:absolute;left:158.8px;top:76px;width:126.7px;height:1px;background:#f7f8fa"></div><div style="position:absolute;left:108.7px;top:86px;width:49.7px;height:1px;background:#9cc0ee"></div><div style="position:absolute;left:158.8px;top:86px;width:126.7px;height:1px;background:#f7f8fa"></div><div style="position:absolute;left:108.7px;top:96px;width:49.7px;height:1px;background:#9cc0ee"></div><div style="position:absolute;left:158.8px;top:96px;width:126.7px;height:1px;background:#f7f8fa"></div><div style="position:absolute;left:108.7px;top:107px;width:49.7px;height:1px;background:#9cc0ee"></div><div style="position:absolute;left:158.8px;top:107px;width:126.7px;height:1px;background:#f7f8fa"></div><div style="position:absolute;left:108.7px;top:117px;width:49.7px;height:1px;background:#9cc0ee"></div><div style="position:absolute;left:158.8px;top:117px;width:126.7px;height:1px;background:#f7f8fa"></div><div style="position:absolute;left:108.7px;top:127px;width:49.7px;height:1px;background:#9cc0ee"></div><div style="position:absolute;left:158.8px;top:127px;width:126.7px;height:1px;background:#f7f8fa"></div><div style="position:absolute;left:108.7px;top:137px;width:49.7px;height:1px;background:#9cc0ee"></div><div style="position:absolute;left:158.8px;top:137px;width:126.7px;height:1px;background:#f7f8fa"></div><div style="position:absolute;left:108.7px;top:147px;width:49.7px;height:1px;background:#9cc0ee"></div><div style="position:absolute;left:158.8px;top:147px;width:126.7px;height:1px;background:#f7f8fa"></div><div style="position:absolute;left:108.7px;top:158px;width:49.7px;height:1px;background:#9cc0ee"></div><div style="position:absolute;left:158.8px;top:158px;width:126.7px;height:1px;background:#f7f8fa"></div><div style="position:absolute;left:108.7px;top:168px;width:49.7px;height:1px;background:#9cc0ee"></div><div style="position:absolute;left:158.8px;top:168px;width:126.7px;height:1px;background:#f7f8fa"></div><div style="position:absolute;left:108.7px;top:178px;width:49.7px;height:1px;background:#9cc0ee"></div><div style="position:absolute;left:158.8px;top:178px;width:126.7px;height:1px;background:#f7f8fa"></div><div style="position:absolute;left:108.7px;top:188px;width:49.7px;height:1px;background:#9cc0ee"></div><div style="position:absolute;left:158.8px;top:188px;width:126.7px;height:1px;background:#f7f8fa"></div><div style="position:absolute;left:108.7px;top:198px;width:49.7px;height:1px;background:#9cc0ee"></div><div style="position:absolute;left:158.8px;top:198px;width:126.7px;height:1px;background:#f7f8fa"></div><div style="position:absolute;left:108.7px;top:209px;width:49.7px;height:1px;background:#9cc0ee"></div><div style="position:absolute;left:158.8px;top:209px;width:126.7px;height:1px;background:#f7f8fa"></div><div style="position:absolute;left:108.7px;top:219px;width:49.7px;height:1px;background:#9cc0ee"></div><div style="position:absolute;left:158.8px;top:219px;width:126.7px;height:1px;background:#f7f8fa"></div><div style="position:absolute;left:108.7px;top:229px;width:49.7px;height:1px;background:#9cc0ee"></div><div style="position:absolute;left:158.8px;top:229px;width:126.7px;height:1px;background:#f7f8fa"></div><div style="position:absolute;left:108.7px;top:239px;width:49.7px;height:1px;background:#9cc0ee"></div><div style="position:absolute;left:158.8px;top:239px;width:126.7px;height:1px;background:#f7f8fa"></div><div style="position:absolute;left:108.7px;top:249px;width:49.7px;height:1px;background:#9cc0ee"></div><div style="position:absolute;left:158.8px;top:249px;width:126.7px;height:1px;background:#f7f8fa"></div><div style="position:absolute;left:108.7px;top:260px;width:49.7px;height:1px;background:#9cc0ee"></div><div style="position:absolute;left:158.8px;top:260px;width:126.7px;height:1px;background:#f7f8fa"></div><div style="position:absolute;left:108.7px;top:270px;width:49.7px;height:1px;background:#9cc0ee"></div><div style="position:absolute;left:158.8px;top:270px;width:126.7px;height:1px;background:#f7f8fa"></div><div style="position:absolute;left:108.7px;top:280px;width:49.7px;height:1px;background:#9cc0ee"></div><div style="position:absolute;left:158.8px;top:280px;width:126.7px;height:1px;background:#f7f8fa"></div><div style="position:absolute;left:108.7px;top:290px;width:49.7px;height:1px;background:#9cc0ee"></div><div style="position:absolute;left:158.8px;top:290px;width:126.7px;height:1px;background:#f7f8fa"></div><div style="position:absolute;left:108.7px;top:300px;width:49.7px;height:1px;background:#9cc0ee"></div><div style="position:absolute;left:158.8px;top:300px;width:126.7px;height:1px;background:#f7f8fa"></div><div style="position:absolute;left:108.7px;top:310px;width:49.7px;height:1px;background:#9cc0ee"></div><div style="position:absolute;left:158.8px;top:310px;width:126.7px;height:1px;background:#f7f8fa"></div><div style="position:absolute;left:108.7px;top:321px;width:49.7px;height:1px;background:#9cc0ee"></div><div style="position:absolute;left:158.8px;top:321px;width:126.7px;height:1px;background:#f7f8fa"></div><div style="position:absolute;left:108.7px;top:331px;width:49.7px;height:1px;background:#9cc0ee"></div><div style="position:absolute;left:158.8px;top:331px;width:126.7px;height:1px;background:#f7f8fa"></div><div style="position:absolute;left:108.7px;top:341px;width:49.7px;height:1px;background:#9cc0ee"></div><div style="position:absolute;left:158.8px;top:341px;width:126.7px;height:1px;background:#f7f8fa"></div><div style="position:absolute;left:108.7px;top:351px;width:49.7px;height:1px;background:#9cc0ee"></div><div style="position:absolute;left:158.8px;top:351px;width:126.7px;height:1px;background:#f7f8fa"></div><div style="position:absolute;left:108.7px;top:361px;width:49.7px;height:1px;background:#9cc0ee"></div><div style="position:absolute;left:158.8px;top:361px;width:126.7px;height:1px;background:#f7f8fa"></div><div style="position:absolute;left:108.7px;top:69.0px;white-space:nowrap;font-size:6.6px;color:#eef5ff;width:47.3px;text-align:right">35</div><div style="position:absolute;left:160.6px;top:69.0px;white-space:nowrap;font-size:6.6px;color:#222;letter-spacing:0.15px">14.07.2015</div><div style="position:absolute;left:198.7px;top:69.0px;white-space:nowrap;font-size:6.6px;color:#222;width:58.5px;text-align:right">155,48</div><div style="position:absolute;left:259.8px;top:69.0px;white-space:nowrap;font-size:6.6px;color:#222;width:23.4px;text-align:right">418,73</div><div style="position:absolute;left:108.7px;top:79.19px;white-space:nowrap;font-size:6.6px;color:#eef5ff;width:47.3px;text-align:right">36</div><div style="position:absolute;left:160.6px;top:79.19px;white-space:nowrap;font-size:6.6px;color:#222;letter-spacing:0.15px">23.07.2015</div><div style="position:absolute;left:198.7px;top:79.19px;white-space:nowrap;font-size:6.6px;color:#222;width:58.5px;text-align:right">156,64</div><div style="position:absolute;left:259.8px;top:79.19px;white-space:nowrap;font-size:6.6px;color:#222;width:23.4px;text-align:right">419,56</div><div style="position:absolute;left:108.7px;top:89.38px;white-space:nowrap;font-size:6.6px;color:#eef5ff;width:47.3px;text-align:right">37</div><div style="position:absolute;left:160.6px;top:89.38px;white-space:nowrap;font-size:6.6px;color:#222;letter-spacing:0.15px">27.07.2015</div><div style="position:absolute;left:198.7px;top:89.38px;white-space:nowrap;font-size:6.6px;color:#222;width:58.5px;text-align:right">155</div><div style="position:absolute;left:259.8px;top:89.38px;white-space:nowrap;font-size:6.6px;color:#222;width:23.4px;text-align:right">419,86</div><div style="position:absolute;left:108.7px;top:99.57px;white-space:nowrap;font-size:6.6px;color:#eef5ff;width:47.3px;text-align:right">38</div><div style="position:absolute;left:160.6px;top:99.57px;white-space:nowrap;font-size:6.6px;color:#222;letter-spacing:0.15px">28.07.2015</div><div style="position:absolute;left:198.7px;top:99.57px;white-space:nowrap;font-size:6.6px;color:#222;width:58.5px;text-align:right">156,03</div><div style="position:absolute;left:259.8px;top:99.57px;white-space:nowrap;font-size:6.6px;color:#222;width:23.4px;text-align:right">420,67</div><div style="position:absolute;left:108.7px;top:109.75999999999999px;white-space:nowrap;font-size:6.6px;color:#eef5ff;width:47.3px;text-align:right">39</div><div style="position:absolute;left:160.6px;top:109.75999999999999px;white-space:nowrap;font-size:6.6px;color:#222;letter-spacing:0.15px">27.08.2015</div><div style="position:absolute;left:198.7px;top:109.75999999999999px;white-space:nowrap;font-size:6.6px;color:#222;width:58.5px;text-align:right">156,44</div><div style="position:absolute;left:259.8px;top:109.75999999999999px;white-space:nowrap;font-size:6.6px;color:#222;width:23.4px;text-align:right">421,13</div><div style="position:absolute;left:108.7px;top:119.94999999999999px;white-space:nowrap;font-size:6.6px;color:#eef5ff;width:47.3px;text-align:right">40</div><div style="position:absolute;left:160.6px;top:119.94999999999999px;white-space:nowrap;font-size:6.6px;color:#222;letter-spacing:0.15px">17.09.2015</div><div style="position:absolute;left:198.7px;top:119.94999999999999px;white-space:nowrap;font-size:6.6px;color:#222;width:58.5px;text-align:right">156,37</div><div style="position:absolute;left:259.8px;top:119.94999999999999px;white-space:nowrap;font-size:6.6px;color:#222;width:23.4px;text-align:right">420,79</div><div style="position:absolute;left:108.7px;top:130.14px;white-space:nowrap;font-size:6.6px;color:#eef5ff;width:47.3px;text-align:right">41</div><div style="position:absolute;left:160.6px;top:130.14px;white-space:nowrap;font-size:6.6px;color:#222;letter-spacing:0.15px">6.10.2015</div><div style="position:absolute;left:198.7px;top:130.14px;white-space:nowrap;font-size:6.6px;color:#222;width:58.5px;text-align:right">157,46</div><div style="position:absolute;left:259.8px;top:130.14px;white-space:nowrap;font-size:6.6px;color:#222;width:23.4px;text-align:right">421,22</div><div style="position:absolute;left:108.7px;top:140.32999999999998px;white-space:nowrap;font-size:6.6px;color:#eef5ff;width:47.3px;text-align:right">42</div><div style="position:absolute;left:160.6px;top:140.32999999999998px;white-space:nowrap;font-size:6.6px;color:#222;letter-spacing:0.15px">7.10.2015</div><div style="position:absolute;left:198.7px;top:140.32999999999998px;white-space:nowrap;font-size:6.6px;color:#222;width:58.5px;text-align:right">156,45</div><div style="position:absolute;left:259.8px;top:140.32999999999998px;white-space:nowrap;font-size:6.6px;color:#222;width:23.4px;text-align:right">418,56</div><div style="position:absolute;left:108.7px;top:150.51999999999998px;white-space:nowrap;font-size:6.6px;color:#eef5ff;width:47.3px;text-align:right">43</div><div style="position:absolute;left:160.6px;top:150.51999999999998px;white-space:nowrap;font-size:6.6px;color:#222;letter-spacing:0.15px">7.10.2015</div><div style="position:absolute;left:198.7px;top:150.51999999999998px;white-space:nowrap;font-size:6.6px;color:#222;width:58.5px;text-align:right">156,05</div><div style="position:absolute;left:259.8px;top:150.51999999999998px;white-space:nowrap;font-size:6.6px;color:#222;width:23.4px;text-align:right">419,93</div><div style="position:absolute;left:108.7px;top:160.70999999999998px;white-space:nowrap;font-size:6.6px;color:#eef5ff;width:47.3px;text-align:right">44</div><div style="position:absolute;left:160.6px;top:160.70999999999998px;white-space:nowrap;font-size:6.6px;color:#222;letter-spacing:0.15px">7.10.2015</div><div style="position:absolute;left:198.7px;top:160.70999999999998px;white-space:nowrap;font-size:6.6px;color:#222;width:58.5px;text-align:right">156,08</div><div style="position:absolute;left:259.8px;top:160.70999999999998px;white-space:nowrap;font-size:6.6px;color:#222;width:23.4px;text-align:right">419,83</div><div style="position:absolute;left:108.7px;top:170.89999999999998px;white-space:nowrap;font-size:6.6px;color:#eef5ff;width:47.3px;text-align:right">45</div><div style="position:absolute;left:160.6px;top:170.89999999999998px;white-space:nowrap;font-size:6.6px;color:#222;letter-spacing:0.15px">7.10.2015</div><div style="position:absolute;left:198.7px;top:170.89999999999998px;white-space:nowrap;font-size:6.6px;color:#222;width:58.5px;text-align:right">156,09</div><div style="position:absolute;left:259.8px;top:170.89999999999998px;white-space:nowrap;font-size:6.6px;color:#222;width:23.4px;text-align:right">419,92</div><div style="position:absolute;left:108.7px;top:181.08999999999997px;white-space:nowrap;font-size:6.6px;color:#eef5ff;width:47.3px;text-align:right">46</div><div style="position:absolute;left:160.6px;top:181.08999999999997px;white-space:nowrap;font-size:6.6px;color:#222;letter-spacing:0.15px">4.11.2015</div><div style="position:absolute;left:198.7px;top:181.08999999999997px;white-space:nowrap;font-size:6.6px;color:#222;width:58.5px;text-align:right">155,9</div><div style="position:absolute;left:259.8px;top:181.08999999999997px;white-space:nowrap;font-size:6.6px;color:#222;width:23.4px;text-align:right">419,25</div><div style="position:absolute;left:108.7px;top:191.28px;white-space:nowrap;font-size:6.6px;color:#eef5ff;width:47.3px;text-align:right">47</div><div style="position:absolute;left:160.6px;top:191.28px;white-space:nowrap;font-size:6.6px;color:#222;letter-spacing:0.15px">5.11.2015</div><div style="position:absolute;left:198.7px;top:191.28px;white-space:nowrap;font-size:6.6px;color:#222;width:58.5px;text-align:right">155,86</div><div style="position:absolute;left:259.8px;top:191.28px;white-space:nowrap;font-size:6.6px;color:#222;width:23.4px;text-align:right">419,05</div><div style="position:absolute;left:108.7px;top:201.47px;white-space:nowrap;font-size:6.6px;color:#eef5ff;width:47.3px;text-align:right">48</div><div style="position:absolute;left:160.6px;top:201.47px;white-space:nowrap;font-size:6.6px;color:#222;letter-spacing:0.15px">5.11.2015</div><div style="position:absolute;left:198.7px;top:201.47px;white-space:nowrap;font-size:6.6px;color:#222;width:58.5px;text-align:right">155,85</div><div style="position:absolute;left:259.8px;top:201.47px;white-space:nowrap;font-size:6.6px;color:#222;width:23.4px;text-align:right">419,26</div><div style="position:absolute;left:108.7px;top:211.66px;white-space:nowrap;font-size:6.6px;color:#eef5ff;width:47.3px;text-align:right">49</div><div style="position:absolute;left:160.6px;top:211.66px;white-space:nowrap;font-size:6.6px;color:#222;letter-spacing:0.15px">5.11.2015</div><div style="position:absolute;left:198.7px;top:211.66px;white-space:nowrap;font-size:6.6px;color:#222;width:58.5px;text-align:right">156,23</div><div style="position:absolute;left:259.8px;top:211.66px;white-space:nowrap;font-size:6.6px;color:#222;width:23.4px;text-align:right">419,91</div><div style="position:absolute;left:108.7px;top:221.85px;white-space:nowrap;font-size:6.6px;color:#eef5ff;width:47.3px;text-align:right">50</div><div style="position:absolute;left:160.6px;top:221.85px;white-space:nowrap;font-size:6.6px;color:#222;letter-spacing:0.15px">5.11.2015</div><div style="position:absolute;left:198.7px;top:221.85px;white-space:nowrap;font-size:6.6px;color:#222;width:58.5px;text-align:right">156,21</div><div style="position:absolute;left:259.8px;top:221.85px;white-space:nowrap;font-size:6.6px;color:#222;width:23.4px;text-align:right">419,81</div><div style="position:absolute;left:108.7px;top:232.04px;white-space:nowrap;font-size:6.6px;color:#eef5ff;width:47.3px;text-align:right">51</div><div style="position:absolute;left:160.6px;top:232.04px;white-space:nowrap;font-size:6.6px;color:#222;letter-spacing:0.15px">23.11.2015</div><div style="position:absolute;left:198.7px;top:232.04px;white-space:nowrap;font-size:6.6px;color:#222;width:58.5px;text-align:right">156,11</div><div style="position:absolute;left:259.8px;top:232.04px;white-space:nowrap;font-size:6.6px;color:#222;width:23.4px;text-align:right">419,16</div><div style="position:absolute;left:108.7px;top:242.23px;white-space:nowrap;font-size:6.6px;color:#eef5ff;width:47.3px;text-align:right">52</div><div style="position:absolute;left:160.6px;top:242.23px;white-space:nowrap;font-size:6.6px;color:#222;letter-spacing:0.15px">24.11.2015</div><div style="position:absolute;left:198.7px;top:242.23px;white-space:nowrap;font-size:6.6px;color:#222;width:58.5px;text-align:right">156,09</div><div style="position:absolute;left:259.8px;top:242.23px;white-space:nowrap;font-size:6.6px;color:#222;width:23.4px;text-align:right">419,27</div><div style="position:absolute;left:108.7px;top:252.42px;white-space:nowrap;font-size:6.6px;color:#eef5ff;width:47.3px;text-align:right">53</div><div style="position:absolute;left:160.6px;top:252.42px;white-space:nowrap;font-size:6.6px;color:#222;letter-spacing:0.15px">18.12.2015</div><div style="position:absolute;left:198.7px;top:252.42px;white-space:nowrap;font-size:6.6px;color:#222;width:58.5px;text-align:right">156,02</div><div style="position:absolute;left:259.8px;top:252.42px;white-space:nowrap;font-size:6.6px;color:#222;width:23.4px;text-align:right">418,86</div><div style="position:absolute;left:108.7px;top:262.61px;white-space:nowrap;font-size:6.6px;color:#eef5ff;width:47.3px;text-align:right">54</div><div style="position:absolute;left:160.6px;top:262.61px;white-space:nowrap;font-size:6.6px;color:#222;letter-spacing:0.15px">18.12.2015</div><div style="position:absolute;left:198.7px;top:262.61px;white-space:nowrap;font-size:6.6px;color:#222;width:58.5px;text-align:right">155,96</div><div style="position:absolute;left:259.8px;top:262.61px;white-space:nowrap;font-size:6.6px;color:#222;width:23.4px;text-align:right">419,04</div><div style="position:absolute;left:108.7px;top:272.79999999999995px;white-space:nowrap;font-size:6.6px;color:#eef5ff;width:47.3px;text-align:right">55</div><div style="position:absolute;left:160.6px;top:272.79999999999995px;white-space:nowrap;font-size:6.6px;color:#222;letter-spacing:0.15px">4.01.2016</div><div style="position:absolute;left:198.7px;top:272.79999999999995px;white-space:nowrap;font-size:6.6px;color:#222;width:58.5px;text-align:right">156,25</div><div style="position:absolute;left:259.8px;top:272.79999999999995px;white-space:nowrap;font-size:6.6px;color:#222;width:23.4px;text-align:right">420,16</div><div style="position:absolute;left:108.7px;top:282.99px;white-space:nowrap;font-size:6.6px;color:#eef5ff;width:47.3px;text-align:right">56</div><div style="position:absolute;left:160.6px;top:282.99px;white-space:nowrap;font-size:6.6px;color:#222;letter-spacing:0.15px">4.01.2016</div><div style="position:absolute;left:198.7px;top:282.99px;white-space:nowrap;font-size:6.6px;color:#222;width:58.5px;text-align:right">156,6</div><div style="position:absolute;left:259.8px;top:282.99px;white-space:nowrap;font-size:6.6px;color:#222;width:23.4px;text-align:right">419,96</div><div style="position:absolute;left:108.7px;top:293.17999999999995px;white-space:nowrap;font-size:6.6px;color:#eef5ff;width:47.3px;text-align:right">57</div><div style="position:absolute;left:160.6px;top:293.17999999999995px;white-space:nowrap;font-size:6.6px;color:#222;letter-spacing:0.15px">4.01.2016</div><div style="position:absolute;left:198.7px;top:293.17999999999995px;white-space:nowrap;font-size:6.6px;color:#222;width:58.5px;text-align:right">156,6</div><div style="position:absolute;left:259.8px;top:293.17999999999995px;white-space:nowrap;font-size:6.6px;color:#222;width:23.4px;text-align:right">420,28</div><div style="position:absolute;left:108.7px;top:303.37px;white-space:nowrap;font-size:6.6px;color:#eef5ff;width:47.3px;text-align:right">58</div><div style="position:absolute;left:160.6px;top:303.37px;white-space:nowrap;font-size:6.6px;color:#222;letter-spacing:0.15px">5.01.2016</div><div style="position:absolute;left:198.7px;top:303.37px;white-space:nowrap;font-size:6.6px;color:#222;width:58.5px;text-align:right">156,22</div><div style="position:absolute;left:259.8px;top:303.37px;white-space:nowrap;font-size:6.6px;color:#222;width:23.4px;text-align:right">419,96</div><div style="position:absolute;left:108.7px;top:313.56px;white-space:nowrap;font-size:6.6px;color:#eef5ff;width:47.3px;text-align:right">59</div><div style="position:absolute;left:160.6px;top:313.56px;white-space:nowrap;font-size:6.6px;color:#222;letter-spacing:0.15px">5.01.2016</div><div style="position:absolute;left:198.7px;top:313.56px;white-space:nowrap;font-size:6.6px;color:#222;width:58.5px;text-align:right">156,27</div><div style="position:absolute;left:259.8px;top:313.56px;white-space:nowrap;font-size:6.6px;color:#222;width:23.4px;text-align:right">420,19</div><div style="position:absolute;left:108.7px;top:323.75px;white-space:nowrap;font-size:6.6px;color:#eef5ff;width:47.3px;text-align:right">60</div><div style="position:absolute;left:160.6px;top:323.75px;white-space:nowrap;font-size:6.6px;color:#222;letter-spacing:0.15px">25.02.2016</div><div style="position:absolute;left:198.7px;top:323.75px;white-space:nowrap;font-size:6.6px;color:#222;width:58.5px;text-align:right">155,37</div><div style="position:absolute;left:259.8px;top:323.75px;white-space:nowrap;font-size:6.6px;color:#222;width:23.4px;text-align:right">418,25</div><div style="position:absolute;left:108.7px;top:333.94px;white-space:nowrap;font-size:6.6px;color:#eef5ff;width:47.3px;text-align:right">61</div><div style="position:absolute;left:160.6px;top:333.94px;white-space:nowrap;font-size:6.6px;color:#222;letter-spacing:0.15px">26.02.2016</div><div style="position:absolute;left:198.7px;top:333.94px;white-space:nowrap;font-size:6.6px;color:#222;width:58.5px;text-align:right">155,36</div><div style="position:absolute;left:259.8px;top:333.94px;white-space:nowrap;font-size:6.6px;color:#222;width:23.4px;text-align:right">417,97</div><div style="position:absolute;left:108.7px;top:344.13px;white-space:nowrap;font-size:6.6px;color:#eef5ff;width:47.3px;text-align:right">62</div><div style="position:absolute;left:160.6px;top:344.13px;white-space:nowrap;font-size:6.6px;color:#222;letter-spacing:0.15px">17.03.2016</div><div style="position:absolute;left:198.7px;top:344.13px;white-space:nowrap;font-size:6.6px;color:#222;width:58.5px;text-align:right">154,84</div><div style="position:absolute;left:259.8px;top:344.13px;white-space:nowrap;font-size:6.6px;color:#222;width:23.4px;text-align:right">417,05</div><div style="position:absolute;left:108.7px;top:354.32px;white-space:nowrap;font-size:6.6px;color:#eef5ff;width:47.3px;text-align:right">63</div><div style="position:absolute;left:160.6px;top:354.32px;white-space:nowrap;font-size:6.6px;color:#222;letter-spacing:0.15px">17.03.2016</div><div style="position:absolute;left:198.7px;top:354.32px;white-space:nowrap;font-size:6.6px;color:#222;width:58.5px;text-align:right">156,44</div><div style="position:absolute;left:259.8px;top:354.32px;white-space:nowrap;font-size:6.6px;color:#222;width:23.4px;text-align:right">419,39</div><div style="position:absolute;left:198.1px;top:66.5px;width:0.7px;height:295.51px;background:#f4f5f7"></div><div style="position:absolute;left:259.2px;top:66.5px;width:0.7px;height:295.51px;background:#f4f5f7"></div><div style="position:absolute;left:158.4px;top:66.5px;width:0.5px;height:295.51px;background:#9ab8e0"></div><div style="position:absolute;left:13px;top:364.8px;width:535px;height:34.2px;background:#b5bddd;border-top:1px solid #9ca6c8"></div><div style="position:absolute;left:14.2px;top:366.8px;width:31px;height:31.5px;background:#8e97b8"></div><div style="position:absolute;left:16.5px;top:369px;width:26.5px;height:27px;background:#fbfbfb"></div><div style="position:absolute;left:18.5px;top:371px;width:8px;height:0.6px;background:#777"></div><div style="position:absolute;left:18.5px;top:373px;width:5px;height:0.5px;background:#999"></div><div style="position:absolute;left:22px;top:376px;width:14px;height:9px;background:#fff;border:0.5px solid #bbb"></div><div style="position:absolute;left:23px;top:379px;width:12px;height:0.6px;background:#e07070"></div><div style="position:absolute;left:23px;top:381px;width:12px;height:0.6px;background:#70c070"></div><div style="position:absolute;left:23px;top:383px;width:12px;height:0.6px;background:#e07070"></div><div style="position:absolute;left:25px;top:387px;width:12px;height:4px;background:#f0f0f0;border:0.4px solid #ccc"></div><div style="position:absolute;left:18.5px;top:393px;width:6px;height:0.5px;background:#888"></div><div style="position:absolute;left:13px;top:399px;width:535px;height:13.5px;background:#e4e9f3;border-top:1px solid #c8d0e0"></div><div style="position:absolute;left:15px;top:403.6px;white-space:nowrap;font-size:6.6px;color:#3e4e78">evaluations done</div><div style="position:absolute;left:286.2px;top:47px;width:263.40000000000003px;height:478px;background:#f6f6f6;border:1px solid #9aa6b8"></div><div style="position:absolute;left:287.2px;top:48px;width:261.40000000000003px;height:15.5px;background:#fff"></div><svg style="position:absolute;left:291px;top:50px" width="9" height="10"><line x1="0" y1="1" x2="9" y2="1" stroke="#e06060" stroke-width="0.8"/><line x1="0" y1="9" x2="9" y2="9" stroke="#e06060" stroke-width="0.8"/><polyline points="0,6 2,3.5 4,6 6,3 9,5" fill="none" stroke="#2a70c8" stroke-width="1.3"/></svg><div style="position:absolute;left:302.5px;top:52.3px;white-space:nowrap;font-size:6.25px;color:#a0a0a0">melting TGADSC - XBar of a, b by Date - JMP</div><div style="position:absolute;left:485.3px;top:55px;width:5.5px;height:0.8px;background:#666"></div><div style="position:absolute;left:509px;top:52.5px;width:6px;height:5.6px;border:0.8px solid #666"></div><svg style="position:absolute;left:534px;top:52.5px" width="6.2" height="6"><path d="M0.3 0.3 L5.9 5.7 M5.9 0.3 L0.3 5.7" stroke="#666" stroke-width="0.8"/></svg><div style="position:absolute;left:287.2px;top:63.4px;width:261.40000000000003px;height:18.6px;background:#f2f2f2"></div><div style="position:absolute;left:290.3px;top:66.1px;white-space:nowrap;font-size:6.5px;color:#505050">File</div><div style="position:absolute;left:307px;top:66.1px;white-space:nowrap;font-size:6.5px;color:#505050">Edit</div><div style="position:absolute;left:325.6px;top:66.1px;white-space:nowrap;font-size:6.5px;color:#505050">Tables</div><div style="position:absolute;left:350.3px;top:66.1px;white-space:nowrap;font-size:6.5px;color:#505050">Rows</div><div style="position:absolute;left:373.2px;top:66.1px;white-space:nowrap;font-size:6.5px;color:#505050">Cols</div><div style="position:absolute;left:393.2px;top:66.1px;white-space:nowrap;font-size:6.5px;color:#505050">DOE</div><div style="position:absolute;left:413px;top:66.1px;white-space:nowrap;font-size:6.5px;color:#505050">Analyze</div><div style="position:absolute;left:442.4px;top:66.1px;white-space:nowrap;font-size:6.5px;color:#505050">Graph</div><div style="position:absolute;left:467.4px;top:66.1px;white-space:nowrap;font-size:6.5px;color:#505050">Tools</div><div style="position:absolute;left:489.4px;top:66.1px;white-space:nowrap;font-size:6.5px;color:#505050">View</div><div style="position:absolute;left:510px;top:66.1px;white-space:nowrap;font-size:6.5px;color:#505050">Window</div><div style="position:absolute;left:290.3px;top:75.2px;white-space:nowrap;font-size:6.5px;color:#505050">Help</div><div style="position:absolute;left:287.2px;top:82px;width:261.40000000000003px;height:13.5px;background:#cdd4ea;border-bottom:1px solid #b0b8d0"></div><div style="position:absolute;left:288px;top:82.5px;width:96px;height:12.5px;background:#dde3f2"></div><div style="position:absolute;left:386px;top:82.5px;width:47px;height:12.5px;background:#dde3f2"></div><div style="position:absolute;left:435px;top:82.5px;width:106px;height:12.5px;background:#dde3f2"></div><svg style="position:absolute;left:286.7px;top:81px" width="100" height="16"><rect x="2.8" y="3.3" width="1" height="1" fill="#505868"/><rect x="2.8" y="5.5" width="1" height="1" fill="#505868"/><rect x="2.8" y="7.7" width="1" height="1" fill="#505868"/><rect x="2.8" y="9.9" width="1" height="1" fill="#505868"/><rect x="7.3" y="3.8" width="8" height="8" fill="#fff" stroke="#3a78c8" stroke-width="0.9"/><line x1="7.3" y1="6.5" x2="15.3" y2="6.5" stroke="#8ab0e0" stroke-width="0.5"/><line x1="10.5" y1="3.8" x2="10.5" y2="11.8" stroke="#8ab0e0" stroke-width="0.5"/><circle cx="7.8" cy="3.8" r="1.6" fill="#f0c030"/><polygon points="12,8 15.8,8 15.8,11.8" fill="#2a70c8"/><rect x="19.5" y="5" width="8" height="6.5" fill="#eef2f8" stroke="#6a8ab8" stroke-width="0.8"/><rect x="18.5" y="3.3" width="4" height="3" fill="#f0c850"/><rect x="21" y="8" width="5" height="2.2" fill="#8898b0"/><path d="M24 4 L26.5 4 L26.5 6.5" fill="none" stroke="#2a8ad8" stroke-width="0.8"/><path d="M30.5 5 L33.5 5 L34.5 6 L38 6 L38 12 L30.5 12 Z" fill="#d8a030"/><path d="M31.5 7.5 L39.5 7.5 L38 12 L30.5 12 Z" fill="#f5c850"/><path d="M36 3.5 Q38.5 3 39 5.5" fill="none" stroke="#3a78c8" stroke-width="0.7"/><rect x="42.8" y="3.8" width="8" height="8.2" fill="#3048b0" stroke="#202c80" stroke-width="0.5"/><rect x="44.5" y="3.8" width="4.5" height="3.2" fill="#e8eef8"/><rect x="44.5" y="8.8" width="4.6" height="3.2" fill="#8a98d8"/><line x1="54" y1="2.5" x2="54" y2="13.5" stroke="#a8b0c4" stroke-width="0.8"/><line x1="59" y1="2.8" x2="62.5" y2="9" stroke="#c0c4cc" stroke-width="0.8"/><line x1="63" y1="2.8" x2="59.5" y2="9" stroke="#c0c4cc" stroke-width="0.8"/><circle cx="59.2" cy="10.8" r="1.5" fill="none" stroke="#b8c0d0" stroke-width="0.9"/><circle cx="62.8" cy="10.8" r="1.5" fill="none" stroke="#b8c0d0" stroke-width="0.9"/><rect x="68" y="4" width="5.5" height="6.5" fill="#dfe9f8" stroke="#4a80d0" stroke-width="0.7"/><rect x="71" y="6.5" width="5.5" height="6.5" fill="#dfe9f8" stroke="#4a80d0" stroke-width="0.7"/><rect x="81" y="4.5" width="7.5" height="8" rx="0.6" fill="#e8b840" stroke="#a07820" stroke-width="0.6"/><rect x="83" y="3.5" width="3.5" height="2" fill="#605030"/><rect x="84" y="7" width="5.5" height="6" fill="#f0f0f0" stroke="#888" stroke-width="0.5"/><line x1="93.3" y1="10.3" x2="96.3" y2="10.3" stroke="#333" stroke-width="0.6"/><polygon points="93.3,11.5 96.3,11.5 94.8,13.3" fill="#333"/></svg><div style="position:absolute;left:388px;top:84.5px;width:1px;height:1px;background:#5a6070"></div><div style="position:absolute;left:388px;top:86.8px;width:1px;height:1px;background:#5a6070"></div><div style="position:absolute;left:388px;top:89.1px;width:1px;height:1px;background:#5a6070"></div><div style="position:absolute;left:388px;top:91.4px;width:1px;height:1px;background:#5a6070"></div><div style="position:absolute;left:392px;top:85px;width:7px;height:8px;background:#f4eee0;border:0.8px solid #e0d8c8"></div><div style="position:absolute;left:404px;top:85px;width:8px;height:8px;background:#eeeeee;border:0.8px solid #d8d8d8"></div><div style="position:absolute;left:416px;top:85px;width:8px;height:8px;background:#eeeeee;border:0.8px solid #d8d8d8"></div><div style="position:absolute;left:426.5px;top:88px;white-space:nowrap;font-size:5px;color:#333">&#x2304;</div><div style="position:absolute;left:436px;top:84.5px;width:1px;height:1px;background:#5a6070"></div><div style="position:absolute;left:436px;top:86.8px;width:1px;height:1px;background:#5a6070"></div><div style="position:absolute;left:436px;top:89.1px;width:1px;height:1px;background:#5a6070"></div><div style="position:absolute;left:436px;top:91.4px;width:1px;height:1px;background:#5a6070"></div><div style="position:absolute;left:438.9px;top:83px;width:10.3px;height:11.5px;background:#c8daf6;border:0.7px solid #a0b8e0"></div><svg style="position:absolute;left:440px;top:84.5px" width="8" height="9"><polygon points="1,0 1,7 3,5.5 4.5,8 5.5,7.5 4.3,5 6.5,5" fill="#fff" stroke="#2050a0" stroke-width="0.8"/></svg><div style="position:absolute;left:453.5px;top:83.5px;white-space:nowrap;font-size:9px;color:#1a50b0;font-weight:bold">?</div><div style="position:absolute;left:463px;top:83px;white-space:nowrap;font-size:9px;color:#2060c0">&#x2723;</div><svg style="position:absolute;left:475px;top:83.5px" width="10" height="10"><path d="M2 9 L1 5 Q0.8 4 1.8 4.3 L3 6 V1.8 Q3.2 1 4 1.5 V5 V1 Q4.6 0.3 5.4 1 V5 V1.5 Q6 0.8 6.8 1.6 V5.5 V3 Q7.5 2.4 8.2 3 V6.5 Q8 9 6.5 9.5 Z" fill="#fff" stroke="#6a6a7a" stroke-width="0.7"/></svg><svg style="position:absolute;left:487px;top:83.5px" width="9" height="9"><path d="M1 8 Q0.5 5.5 3 5 L8.5 0.5 L8.8 1.2 L4.5 6.2 Q4 8.5 1 8 Z" fill="#2a6ad0"/><path d="M6.5 1.5 L8.5 0.5 L7.5 2.5 Z" fill="#e0a020"/></svg><svg style="position:absolute;left:499.3px;top:84px" width="9" height="9"><ellipse cx="5.5" cy="3.5" rx="3" ry="2.6" fill="none" stroke="#2050a0" stroke-width="1.1"/><path d="M3.5 5.5 Q2.5 7 1 8.5" fill="none" stroke="#2050a0" stroke-width="1.1"/></svg><svg style="position:absolute;left:510.9px;top:84px" width="9" height="9"><circle cx="3.6" cy="3.6" r="2.6" fill="#fff" stroke="#2a4a80" stroke-width="1"/><line x1="5.6" y1="5.6" x2="8.3" y2="8.3" stroke="#c08020" stroke-width="1.6"/></svg><svg style="position:absolute;left:523.3px;top:84.5px" width="8" height="8"><line x1="4" y1="0.3" x2="4" y2="7.7" stroke="#1a5ac8" stroke-width="1.3"/><line x1="0.3" y1="4" x2="7.7" y2="4" stroke="#1a5ac8" stroke-width="1.3"/></svg><div style="position:absolute;left:535px;top:89.5px;width:2.6px;height:2.6px;background:#333;border-top:0.8px solid #ddd"></div><div style="position:absolute;left:287.2px;top:95.5px;width:261.40000000000003px;height:417px;background:#f7f7f7"></div><svg style="position:absolute;left:287.1px;top:103.7px" width="6" height="6"><polygon points="0.5,5.2 5.2,0.5 5.2,5.2" fill="#f0f0f0" stroke="#8a8a8a" stroke-width="0.7"/></svg><div style="position:absolute;left:293.1px;top:101.2px;width:254.5px;height:10.5px;background:#ececec;border:0.7px solid #d4d4d4"></div><div style="position:absolute;left:295.2px;top:103.0px;width:7px;height:7px;background:#fbfbfb;border:0.6px solid #c4c4c4;border-radius:1px"><div style="position:absolute;left:0.3999999999999999px;top:1.5px;width:0;height:0;border-left:2.6px solid transparent;border-right:2.6px solid transparent;border-top:3.1px solid #d0101a"></div></div><div style="position:absolute;left:304.0px;top:102.5px;white-space:nowrap;font-size:7.9px;color:#111;font-weight:bold">Variables Control Chart</div><svg style="position:absolute;left:294.1px;top:117.1px" width="6" height="6"><polygon points="0.5,5.2 5.2,0.5 5.2,5.2" fill="#f0f0f0" stroke="#8a8a8a" stroke-width="0.7"/></svg><div style="position:absolute;left:300.1px;top:114.6px;width:247.5px;height:10.9px;background:#ececec;border:0.7px solid #d4d4d4"></div><div style="position:absolute;left:302.7px;top:116.39999999999999px;width:7px;height:7px;background:#fbfbfb;border:0.6px solid #c4c4c4;border-radius:1px"><div style="position:absolute;left:0.3999999999999999px;top:1.5px;width:0;height:0;border-left:2.6px solid transparent;border-right:2.6px solid transparent;border-top:3.1px solid #d0101a"></div></div><div style="position:absolute;left:311.5px;top:115.89999999999999px;white-space:nowrap;font-size:7.9px;color:#111;font-weight:bold">XBar of a</div><svg style="position:absolute;left:320px;top:125px;overflow:visible" width="240" height="300"><rect x="11.800000000000011" y="8.199999999999989" width="168.8" height="111.0" fill="#fff" stroke="#cfcfcf" stroke-width="0.9"/><line x1="8.300000000000011" y1="17.0" x2="11.800000000000011" y2="17.0" stroke="#777" stroke-width="0.6"/><text x="6.800000000000011" y="19.3" font-size="6.6" text-anchor="end" fill="#3a3a3a" font-family="Liberation Sans">164</text><line x1="8.300000000000011" y1="35.69999999999999" x2="11.800000000000011" y2="35.69999999999999" stroke="#777" stroke-width="0.6"/><text x="6.800000000000011" y="37.999999999999986" font-size="6.6" text-anchor="end" fill="#3a3a3a" font-family="Liberation Sans">162</text><line x1="8.300000000000011" y1="54.400000000000006" x2="11.800000000000011" y2="54.400000000000006" stroke="#777" stroke-width="0.6"/><text x="6.800000000000011" y="56.7" font-size="6.6" text-anchor="end" fill="#3a3a3a" font-family="Liberation Sans">160</text><line x1="8.300000000000011" y1="73.0" x2="11.800000000000011" y2="73.0" stroke="#777" stroke-width="0.6"/><text x="6.800000000000011" y="75.3" font-size="6.6" text-anchor="end" fill="#3a3a3a" font-family="Liberation Sans">158</text><line x1="8.300000000000011" y1="91.69999999999999" x2="11.800000000000011" y2="91.69999999999999" stroke="#777" stroke-width="0.6"/><text x="6.800000000000011" y="93.99999999999999" font-size="6.6" text-anchor="end" fill="#3a3a3a" font-family="Liberation Sans">156</text><line x1="8.300000000000011" y1="110.4" x2="11.800000000000011" y2="110.4" stroke="#777" stroke-width="0.6"/><text x="6.800000000000011" y="112.7" font-size="6.6" text-anchor="end" fill="#3a3a3a" font-family="Liberation Sans">154</text><line x1="9.800000000000011" y1="26.349999999999994" x2="11.800000000000011" y2="26.349999999999994" stroke="#999" stroke-width="0.5"/><line x1="9.800000000000011" y1="45.05000000000001" x2="11.800000000000011" y2="45.05000000000001" stroke="#999" stroke-width="0.5"/><line x1="9.800000000000011" y1="63.75" x2="11.800000000000011" y2="63.75" stroke="#999" stroke-width="0.5"/><line x1="9.800000000000011" y1="82.35" x2="11.800000000000011" y2="82.35" stroke="#999" stroke-width="0.5"/><line x1="9.800000000000011" y1="101.05000000000001" x2="11.800000000000011" y2="101.05000000000001" stroke="#999" stroke-width="0.5"/><line x1="23.69999999999999" y1="119.19999999999999" x2="23.69999999999999" y2="122.19999999999999" stroke="#777" stroke-width="0.6"/><line x1="36.0" y1="119.19999999999999" x2="36.0" y2="122.19999999999999" stroke="#777" stroke-width="0.6"/><line x1="48.5" y1="119.19999999999999" x2="48.5" y2="122.19999999999999" stroke="#777" stroke-width="0.6"/><line x1="61.0" y1="119.19999999999999" x2="61.0" y2="122.19999999999999" stroke="#777" stroke-width="0.6"/><line x1="73.69999999999999" y1="119.19999999999999" x2="73.69999999999999" y2="122.19999999999999" stroke="#777" stroke-width="0.6"/><line x1="85.80000000000001" y1="119.19999999999999" x2="85.80000000000001" y2="122.19999999999999" stroke="#777" stroke-width="0.6"/><line x1="98.0" y1="119.19999999999999" x2="98.0" y2="122.19999999999999" stroke="#777" stroke-width="0.6"/><line x1="110.80000000000001" y1="119.19999999999999" x2="110.80000000000001" y2="122.19999999999999" stroke="#777" stroke-width="0.6"/><line x1="123.0" y1="119.19999999999999" x2="123.0" y2="122.19999999999999" stroke="#777" stroke-width="0.6"/><line x1="135.2" y1="119.19999999999999" x2="135.2" y2="122.19999999999999" stroke="#777" stroke-width="0.6"/><line x1="147.3" y1="119.19999999999999" x2="147.3" y2="122.19999999999999" stroke="#777" stroke-width="0.6"/><line x1="160.0" y1="119.19999999999999" x2="160.0" y2="122.19999999999999" stroke="#777" stroke-width="0.6"/><line x1="12.300000000000011" y1="72.19999999999999" x2="180.60000000000002" y2="72.19999999999999" stroke="#ee5a6a" stroke-width="1.25"/><line x1="12.300000000000011" y1="100.19999999999999" x2="180.60000000000002" y2="100.19999999999999" stroke="#ee5a6a" stroke-width="1.25"/><line x1="12.300000000000011" y1="86.19999999999999" x2="180.60000000000002" y2="86.19999999999999" stroke="#55cc55" stroke-width="1.25"/><polyline fill="none" stroke="#c4c4c4" stroke-width="0.7" points="13.20,86.60 15.20,89.00 17.60,90.60 20.00,92.20 22.40,99.30 24.00,100.50 25.20,81.80 27.20,84.20 29.20,86.20 30.40,91.40 32.40,88.20 34.80,90.60 37.60,93.00 40.40,95.40 42.70,86.60 45.10,82.60 47.50,81.80 49.50,83.00 51.90,88.60 53.50,86.20 55.50,96.20 57.10,85.40 58.70,100.50 59.50,91.40 62.60,87.40 64.60,88.20 65.80,77.80 67.40,89.80 69.40,92.20 71.80,90.60 74.20,90.20 76.20,91.80 78.20,86.60 80.20,89.40 81.40,97.30 83.40,97.70 85.40,94.60 86.70,47.20 88.80,110.40 91.00,85.40 93.10,85.60 95.20,86.00 97.40,87.10 99.50,87.70 101.20,83.50 103.10,88.60 104.80,88.20 106.30,85.60 108.50,85.20 110.20,27.00 111.70,98.20 113.80,100.50 115.50,88.60 117.00,89.90 119.10,86.00 120.80,81.80 122.50,85.40 124.00,79.20 126.20,91.40 127.60,89.60 129.30,92.40 131.30,96.30 133.00,78.10 135.10,83.90 137.20,86.00 139.40,87.50 140.90,88.60 142.60,85.00 144.70,82.80 146.20,80.70 147.90,76.40 149.00,74.90 151.10,79.60 152.80,78.60 154.30,85.60 156.40,90.30 158.60,92.00 160.70,93.50 162.80,93.90 164.30,94.10"/><line x1="13.20" y1="86.60" x2="15.20" y2="89.00" stroke="#000" stroke-width="3.5" stroke-linecap="round"/><line x1="15.20" y1="89.00" x2="17.60" y2="90.60" stroke="#000" stroke-width="3.5" stroke-linecap="round"/><line x1="17.60" y1="90.60" x2="20.00" y2="92.20" stroke="#000" stroke-width="3.5" stroke-linecap="round"/><line x1="22.40" y1="99.30" x2="24.00" y2="100.50" stroke="#000" stroke-width="3.5" stroke-linecap="round"/><line x1="25.20" y1="81.80" x2="27.20" y2="84.20" stroke="#000" stroke-width="3.5" stroke-linecap="round"/><line x1="27.20" y1="84.20" x2="29.20" y2="86.20" stroke="#000" stroke-width="3.5" stroke-linecap="round"/><line x1="29.20" y1="86.20" x2="30.40" y2="91.40" stroke="#000" stroke-width="3.5" stroke-linecap="round"/><line x1="30.40" y1="91.40" x2="32.40" y2="88.20" stroke="#000" stroke-width="3.5" stroke-linecap="round"/><line x1="32.40" y1="88.20" x2="34.80" y2="90.60" stroke="#000" stroke-width="3.5" stroke-linecap="round"/><line x1="34.80" y1="90.60" x2="37.60" y2="93.00" stroke="#000" stroke-width="3.5" stroke-linecap="round"/><line x1="37.60" y1="93.00" x2="40.40" y2="95.40" stroke="#000" stroke-width="3.5" stroke-linecap="round"/><line x1="42.70" y1="86.60" x2="45.10" y2="82.60" stroke="#000" stroke-width="3.5" stroke-linecap="round"/><line x1="45.10" y1="82.60" x2="47.50" y2="81.80" stroke="#000" stroke-width="3.5" stroke-linecap="round"/><line x1="47.50" y1="81.80" x2="49.50" y2="83.00" stroke="#000" stroke-width="3.5" stroke-linecap="round"/><line x1="51.90" y1="88.60" x2="53.50" y2="86.20" stroke="#000" stroke-width="3.5" stroke-linecap="round"/><line x1="59.50" y1="91.40" x2="62.60" y2="87.40" stroke="#000" stroke-width="3.5" stroke-linecap="round"/><line x1="62.60" y1="87.40" x2="64.60" y2="88.20" stroke="#000" stroke-width="3.5" stroke-linecap="round"/><line x1="67.40" y1="89.80" x2="69.40" y2="92.20" stroke="#000" stroke-width="3.5" stroke-linecap="round"/><line x1="69.40" y1="92.20" x2="71.80" y2="90.60" stroke="#000" stroke-width="3.5" stroke-linecap="round"/><line x1="71.80" y1="90.60" x2="74.20" y2="90.20" stroke="#000" stroke-width="3.5" stroke-linecap="round"/><line x1="74.20" y1="90.20" x2="76.20" y2="91.80" stroke="#000" stroke-width="3.5" stroke-linecap="round"/><line x1="78.20" y1="86.60" x2="80.20" y2="89.40" stroke="#000" stroke-width="3.5" stroke-linecap="round"/><line x1="81.40" y1="97.30" x2="83.40" y2="97.70" stroke="#000" stroke-width="3.5" stroke-linecap="round"/><line x1="83.40" y1="97.70" x2="85.40" y2="94.60" stroke="#000" stroke-width="3.5" stroke-linecap="round"/><line x1="91.00" y1="85.40" x2="93.10" y2="85.60" stroke="#000" stroke-width="2.6" stroke-linecap="round"/><line x1="93.10" y1="85.60" x2="95.20" y2="86.00" stroke="#000" stroke-width="2.6" stroke-linecap="round"/><line x1="95.20" y1="86.00" x2="97.40" y2="87.10" stroke="#000" stroke-width="2.6" stroke-linecap="round"/><line x1="97.40" y1="87.10" x2="99.50" y2="87.70" stroke="#000" stroke-width="2.6" stroke-linecap="round"/><line x1="103.10" y1="88.60" x2="104.80" y2="88.20" stroke="#000" stroke-width="2.6" stroke-linecap="round"/><line x1="106.30" y1="85.60" x2="108.50" y2="85.20" stroke="#000" stroke-width="2.6" stroke-linecap="round"/><line x1="115.50" y1="88.60" x2="117.00" y2="89.90" stroke="#000" stroke-width="2.6" stroke-linecap="round"/><line x1="126.20" y1="91.40" x2="127.60" y2="89.60" stroke="#000" stroke-width="2.6" stroke-linecap="round"/><line x1="137.20" y1="86.00" x2="139.40" y2="87.50" stroke="#000" stroke-width="2.6" stroke-linecap="round"/><line x1="139.40" y1="87.50" x2="140.90" y2="88.60" stroke="#000" stroke-width="2.6" stroke-linecap="round"/><line x1="144.70" y1="82.80" x2="146.20" y2="80.70" stroke="#000" stroke-width="2.6" stroke-linecap="round"/><line x1="147.90" y1="76.40" x2="149.00" y2="74.90" stroke="#000" stroke-width="2.6" stroke-linecap="round"/><line x1="151.10" y1="79.60" x2="152.80" y2="78.60" stroke="#000" stroke-width="2.6" stroke-linecap="round"/><line x1="158.60" y1="92.00" x2="160.70" y2="93.50" stroke="#000" stroke-width="2.6" stroke-linecap="round"/><line x1="160.70" y1="93.50" x2="162.80" y2="93.90" stroke="#000" stroke-width="2.6" stroke-linecap="round"/><line x1="162.80" y1="93.90" x2="164.30" y2="94.10" stroke="#000" stroke-width="2.6" stroke-linecap="round"/><circle cx="13.20" cy="86.60" r="1.85" fill="#000"/><circle cx="15.20" cy="89.00" r="1.85" fill="#000"/><circle cx="17.60" cy="90.60" r="1.85" fill="#000"/><circle cx="20.00" cy="92.20" r="1.85" fill="#000"/><circle cx="22.40" cy="99.30" r="1.85" fill="#000"/><circle cx="24.00" cy="100.50" r="1.85" fill="#000"/><circle cx="25.20" cy="81.80" r="1.85" fill="#000"/><circle cx="27.20" cy="84.20" r="1.85" fill="#000"/><circle cx="29.20" cy="86.20" r="1.85" fill="#000"/><circle cx="30.40" cy="91.40" r="1.85" fill="#000"/><circle cx="32.40" cy="88.20" r="1.85" fill="#000"/><circle cx="34.80" cy="90.60" r="1.85" fill="#000"/><circle cx="37.60" cy="93.00" r="1.85" fill="#000"/><circle cx="40.40" cy="95.40" r="1.85" fill="#000"/><circle cx="42.70" cy="86.60" r="1.85" fill="#000"/><circle cx="45.10" cy="82.60" r="1.85" fill="#000"/><circle cx="47.50" cy="81.80" r="1.85" fill="#000"/><circle cx="49.50" cy="83.00" r="1.85" fill="#000"/><circle cx="51.90" cy="88.60" r="1.85" fill="#000"/><circle cx="53.50" cy="86.20" r="1.85" fill="#000"/><circle cx="55.50" cy="96.20" r="1.85" fill="#000"/><circle cx="57.10" cy="85.40" r="1.85" fill="#000"/><circle cx="58.70" cy="100.50" r="1.85" fill="#000"/><circle cx="59.50" cy="91.40" r="1.85" fill="#000"/><circle cx="62.60" cy="87.40" r="1.85" fill="#000"/><circle cx="64.60" cy="88.20" r="1.85" fill="#000"/><circle cx="65.80" cy="77.80" r="1.85" fill="#000"/><circle cx="67.40" cy="89.80" r="1.85" fill="#000"/><circle cx="69.40" cy="92.20" r="1.85" fill="#000"/><circle cx="71.80" cy="90.60" r="1.85" fill="#000"/><circle cx="74.20" cy="90.20" r="1.85" fill="#000"/><circle cx="76.20" cy="91.80" r="1.85" fill="#000"/><circle cx="78.20" cy="86.60" r="1.85" fill="#000"/><circle cx="80.20" cy="89.40" r="1.85" fill="#000"/><circle cx="81.40" cy="97.30" r="1.85" fill="#000"/><circle cx="83.40" cy="97.70" r="1.85" fill="#000"/><circle cx="85.40" cy="94.60" r="1.85" fill="#000"/><circle cx="86.70" cy="47.20" r="1.4" fill="#000"/><circle cx="88.80" cy="110.40" r="1.4" fill="#000"/><circle cx="91.00" cy="85.40" r="1.4" fill="#000"/><circle cx="93.10" cy="85.60" r="1.4" fill="#000"/><circle cx="95.20" cy="86.00" r="1.4" fill="#000"/><circle cx="97.40" cy="87.10" r="1.4" fill="#000"/><circle cx="99.50" cy="87.70" r="1.4" fill="#000"/><circle cx="101.20" cy="83.50" r="1.4" fill="#000"/><circle cx="103.10" cy="88.60" r="1.4" fill="#000"/><circle cx="104.80" cy="88.20" r="1.4" fill="#000"/><circle cx="106.30" cy="85.60" r="1.4" fill="#000"/><circle cx="108.50" cy="85.20" r="1.4" fill="#000"/><circle cx="110.20" cy="27.00" r="1.4" fill="#000"/><circle cx="111.70" cy="98.20" r="1.4" fill="#000"/><circle cx="113.80" cy="100.50" r="1.4" fill="#000"/><circle cx="115.50" cy="88.60" r="1.4" fill="#000"/><circle cx="117.00" cy="89.90" r="1.4" fill="#000"/><circle cx="119.10" cy="86.00" r="1.4" fill="#000"/><circle cx="120.80" cy="81.80" r="1.4" fill="#000"/><circle cx="122.50" cy="85.40" r="1.4" fill="#000"/><circle cx="124.00" cy="79.20" r="1.4" fill="#000"/><circle cx="126.20" cy="91.40" r="1.4" fill="#000"/><circle cx="127.60" cy="89.60" r="1.4" fill="#000"/><circle cx="129.30" cy="92.40" r="1.4" fill="#000"/><circle cx="131.30" cy="96.30" r="1.4" fill="#000"/><circle cx="133.00" cy="78.10" r="1.4" fill="#000"/><circle cx="135.10" cy="83.90" r="1.4" fill="#000"/><circle cx="137.20" cy="86.00" r="1.4" fill="#000"/><circle cx="139.40" cy="87.50" r="1.4" fill="#000"/><circle cx="140.90" cy="88.60" r="1.4" fill="#000"/><circle cx="142.60" cy="85.00" r="1.4" fill="#000"/><circle cx="144.70" cy="82.80" r="1.4" fill="#000"/><circle cx="146.20" cy="80.70" r="1.4" fill="#000"/><circle cx="147.90" cy="76.40" r="1.4" fill="#000"/><circle cx="149.00" cy="74.90" r="1.4" fill="#000"/><circle cx="151.10" cy="79.60" r="1.4" fill="#000"/><circle cx="152.80" cy="78.60" r="1.4" fill="#000"/><circle cx="154.30" cy="85.60" r="1.4" fill="#000"/><circle cx="156.40" cy="90.30" r="1.4" fill="#000"/><circle cx="158.60" cy="92.00" r="1.4" fill="#000"/><circle cx="160.70" cy="93.50" r="1.4" fill="#000"/><circle cx="162.80" cy="93.90" r="1.4" fill="#000"/><circle cx="164.30" cy="94.10" r="1.4" fill="#000"/><text transform="translate(26.00,122.70) rotate(-90)" font-size="6.65" text-anchor="end" fill="#3a3a3a" font-family="Liberation Sans">13. 03. 2015</text><text transform="translate(38.30,122.70) rotate(-90)" font-size="6.65" text-anchor="end" fill="#3a3a3a" font-family="Liberation Sans">16. 04. 2015</text><text transform="translate(50.80,122.70) rotate(-90)" font-size="6.65" text-anchor="end" fill="#3a3a3a" font-family="Liberation Sans">22. 05. 2015</text><text transform="translate(63.30,122.70) rotate(-90)" font-size="6.65" text-anchor="end" fill="#3a3a3a" font-family="Liberation Sans">28. 07. 2015</text><text transform="translate(76.00,122.70) rotate(-90)" font-size="6.65" text-anchor="end" fill="#3a3a3a" font-family="Liberation Sans">23. 11. 2015</text><text transform="translate(88.10,122.70) rotate(-90)" font-size="6.65" text-anchor="end" fill="#3a3a3a" font-family="Liberation Sans">17. 03. 2016</text><text transform="translate(100.30,122.70) rotate(-90)" font-size="6.65" text-anchor="end" fill="#3a3a3a" font-family="Liberation Sans">24. 08. 2016</text><text transform="translate(113.10,122.70) rotate(-90)" font-size="6.65" text-anchor="end" fill="#3a3a3a" font-family="Liberation Sans">8.11.2016</text><text transform="translate(125.30,122.70) rotate(-90)" font-size="6.65" text-anchor="end" fill="#3a3a3a" font-family="Liberation Sans">12. 01. 2017</text><text transform="translate(137.50,122.70) rotate(-90)" font-size="6.65" text-anchor="end" fill="#3a3a3a" font-family="Liberation Sans">23. 06. 2017</text><text transform="translate(149.60,122.70) rotate(-90)" font-size="6.65" text-anchor="end" fill="#3a3a3a" font-family="Liberation Sans">29. 08. 2017</text><text transform="translate(162.30,122.70) rotate(-90)" font-size="6.65" text-anchor="end" fill="#3a3a3a" font-family="Liberation Sans">27. 11. 2017</text></svg><div style="position:absolute;left:502px;top:195px;white-space:nowrap;font-size:6.35px;color:#333;-webkit-text-stroke:0">UCL=158,10</div><div style="position:absolute;left:502px;top:208.8px;white-space:nowrap;font-size:6.35px;color:#333;-webkit-text-stroke:0">&mu;<sub style='font-size:4px'>0</sub>=156,60</div><div style="position:absolute;left:502px;top:223.3px;white-space:nowrap;font-size:6.35px;color:#333;-webkit-text-stroke:0">LCL=155,10</div><div style="position:absolute;left:307.5px;top:201.8px;white-space:nowrap;font-size:6.3px;color:#333;transform:rotate(-90deg);transform-origin:0 0;-webkit-text-stroke:0">Mean of a</div><div style="position:absolute;left:407.6px;top:286.5px;white-space:nowrap;font-size:6.7px;color:#333;-webkit-text-stroke:0">Date</div><div style="position:absolute;left:299.3px;top:299.8px;white-space:nowrap;font-size:4.95px;color:#222;-webkit-text-stroke:0.05px #222">Note: The sigma was calculated using the range.</div><svg style="position:absolute;left:294.1px;top:316.2px" width="6" height="6"><polygon points="0.5,5.2 5.2,0.5 5.2,5.2" fill="#f0f0f0" stroke="#8a8a8a" stroke-width="0.7"/></svg><div style="position:absolute;left:300.1px;top:313.7px;width:247.5px;height:10.9px;background:#ececec;border:0.7px solid #d4d4d4"></div><div style="position:absolute;left:302.7px;top:315.5px;width:7px;height:7px;background:#fbfbfb;border:0.6px solid #c4c4c4;border-radius:1px"><div style="position:absolute;left:0.3999999999999999px;top:1.5px;width:0;height:0;border-left:2.6px solid transparent;border-right:2.6px solid transparent;border-top:3.1px solid #d0101a"></div></div><div style="position:absolute;left:311.5px;top:315.0px;white-space:nowrap;font-size:7.9px;color:#111;font-weight:bold">XBar of b</div><svg style="position:absolute;left:320px;top:325px;overflow:visible" width="240" height="300"><rect x="11.800000000000011" y="6.800000000000011" width="168.8" height="111.19999999999999" fill="#fff" stroke="#cfcfcf" stroke-width="0.9"/><line x1="8.300000000000011" y1="7.399999999999977" x2="11.800000000000011" y2="7.399999999999977" stroke="#777" stroke-width="0.6"/><text x="6.800000000000011" y="9.699999999999978" font-size="6.6" text-anchor="end" fill="#3a3a3a" font-family="Liberation Sans">435</text><line x1="8.300000000000011" y1="27.600000000000023" x2="11.800000000000011" y2="27.600000000000023" stroke="#777" stroke-width="0.6"/><text x="6.800000000000011" y="29.900000000000023" font-size="6.6" text-anchor="end" fill="#3a3a3a" font-family="Liberation Sans">430</text><line x1="8.300000000000011" y1="47.80000000000001" x2="11.800000000000011" y2="47.80000000000001" stroke="#777" stroke-width="0.6"/><text x="6.800000000000011" y="50.10000000000001" font-size="6.6" text-anchor="end" fill="#3a3a3a" font-family="Liberation Sans">425</text><line x1="8.300000000000011" y1="68.0" x2="11.800000000000011" y2="68.0" stroke="#777" stroke-width="0.6"/><text x="6.800000000000011" y="70.3" font-size="6.6" text-anchor="end" fill="#3a3a3a" font-family="Liberation Sans">420</text><line x1="8.300000000000011" y1="88.19999999999999" x2="11.800000000000011" y2="88.19999999999999" stroke="#777" stroke-width="0.6"/><text x="6.800000000000011" y="90.49999999999999" font-size="6.6" text-anchor="end" fill="#3a3a3a" font-family="Liberation Sans">415</text><line x1="8.300000000000011" y1="108.39999999999998" x2="11.800000000000011" y2="108.39999999999998" stroke="#777" stroke-width="0.6"/><text x="6.800000000000011" y="110.69999999999997" font-size="6.6" text-anchor="end" fill="#3a3a3a" font-family="Liberation Sans">410</text><line x1="9.800000000000011" y1="17.5" x2="11.800000000000011" y2="17.5" stroke="#999" stroke-width="0.5"/><line x1="9.800000000000011" y1="37.69999999999999" x2="11.800000000000011" y2="37.69999999999999" stroke="#999" stroke-width="0.5"/><line x1="9.800000000000011" y1="57.89999999999998" x2="11.800000000000011" y2="57.89999999999998" stroke="#999" stroke-width="0.5"/><line x1="9.800000000000011" y1="78.10000000000002" x2="11.800000000000011" y2="78.10000000000002" stroke="#999" stroke-width="0.5"/><line x1="9.800000000000011" y1="98.30000000000001" x2="11.800000000000011" y2="98.30000000000001" stroke="#999" stroke-width="0.5"/><line x1="23.69999999999999" y1="118.0" x2="23.69999999999999" y2="121.0" stroke="#777" stroke-width="0.6"/><line x1="36.0" y1="118.0" x2="36.0" y2="121.0" stroke="#777" stroke-width="0.6"/><line x1="48.5" y1="118.0" x2="48.5" y2="121.0" stroke="#777" stroke-width="0.6"/><line x1="61.0" y1="118.0" x2="61.0" y2="121.0" stroke="#777" stroke-width="0.6"/><line x1="73.69999999999999" y1="118.0" x2="73.69999999999999" y2="121.0" stroke="#777" stroke-width="0.6"/><line x1="85.80000000000001" y1="118.0" x2="85.80000000000001" y2="121.0" stroke="#777" stroke-width="0.6"/><line x1="98.0" y1="118.0" x2="98.0" y2="121.0" stroke="#777" stroke-width="0.6"/><line x1="110.80000000000001" y1="118.0" x2="110.80000000000001" y2="121.0" stroke="#777" stroke-width="0.6"/><line x1="123.0" y1="118.0" x2="123.0" y2="121.0" stroke="#777" stroke-width="0.6"/><line x1="135.2" y1="118.0" x2="135.2" y2="121.0" stroke="#777" stroke-width="0.6"/><line x1="147.3" y1="118.0" x2="147.3" y2="121.0" stroke="#777" stroke-width="0.6"/><line x1="160.0" y1="118.0" x2="160.0" y2="121.0" stroke="#777" stroke-width="0.6"/><line x1="12.300000000000011" y1="62.0" x2="180.60000000000002" y2="62.0" stroke="#ee5a6a" stroke-width="1.25"/><line x1="12.300000000000011" y1="78.19999999999999" x2="180.60000000000002" y2="78.19999999999999" stroke="#ee5a6a" stroke-width="1.25"/><line x1="12.300000000000011" y1="70.19999999999999" x2="180.60000000000002" y2="70.19999999999999" stroke="#55cc55" stroke-width="1.25"/><polyline fill="none" stroke="#c4c4c4" stroke-width="0.7" points="13.20,71.60 14.80,76.80 16.00,71.20 18.00,72.00 20.00,74.00 21.60,80.40 23.60,82.30 25.20,74.00 27.20,78.00 28.80,67.20 30.40,70.40 32.40,71.60 34.80,70.00 37.20,67.60 38.80,70.00 41.20,71.20 43.10,68.40 45.10,65.20 47.50,65.60 49.90,67.20 51.50,71.60 53.50,70.00 55.10,72.80 57.80,68.40 60.20,64.80 62.20,62.40 64.20,63.60 66.20,62.40 67.40,69.20 69.80,70.80 72.20,70.00 74.60,71.20 76.60,72.40 78.20,66.80 80.20,67.20 81.40,74.80 83.40,76.40 85.40,75.20 87.10,28.60 89.00,74.00 91.00,69.10 93.10,68.70 95.20,69.50 97.40,70.80 99.50,72.30 101.60,71.20 103.80,70.80 105.30,66.50 107.00,68.00 108.50,81.30 110.20,43.10 111.70,82.30 113.40,81.50 115.50,69.50 117.00,67.00 118.70,64.40 120.80,64.40 123.00,63.80 124.40,63.10 126.20,68.00 128.30,68.00 129.30,72.90 131.50,75.90 133.00,62.70 135.10,72.90 136.80,77.60 138.30,79.30 140.40,81.50 141.90,74.00 143.60,105.30 145.80,71.70 147.30,68.00 149.60,71.20 151.70,72.90 153.70,72.30 156.00,69.10 158.10,68.70 160.30,70.20 162.20,71.70 163.90,70.20"/><line x1="13.20" y1="71.60" x2="14.80" y2="76.80" stroke="#000" stroke-width="3.5" stroke-linecap="round"/><line x1="16.00" y1="71.20" x2="18.00" y2="72.00" stroke="#000" stroke-width="3.5" stroke-linecap="round"/><line x1="18.00" y1="72.00" x2="20.00" y2="74.00" stroke="#000" stroke-width="3.5" stroke-linecap="round"/><line x1="21.60" y1="80.40" x2="23.60" y2="82.30" stroke="#000" stroke-width="3.5" stroke-linecap="round"/><line x1="25.20" y1="74.00" x2="27.20" y2="78.00" stroke="#000" stroke-width="3.5" stroke-linecap="round"/><line x1="28.80" y1="67.20" x2="30.40" y2="70.40" stroke="#000" stroke-width="3.5" stroke-linecap="round"/><line x1="30.40" y1="70.40" x2="32.40" y2="71.60" stroke="#000" stroke-width="3.5" stroke-linecap="round"/><line x1="32.40" y1="71.60" x2="34.80" y2="70.00" stroke="#000" stroke-width="3.5" stroke-linecap="round"/><line x1="34.80" y1="70.00" x2="37.20" y2="67.60" stroke="#000" stroke-width="3.5" stroke-linecap="round"/><line x1="37.20" y1="67.60" x2="38.80" y2="70.00" stroke="#000" stroke-width="3.5" stroke-linecap="round"/><line x1="38.80" y1="70.00" x2="41.20" y2="71.20" stroke="#000" stroke-width="3.5" stroke-linecap="round"/><line x1="41.20" y1="71.20" x2="43.10" y2="68.40" stroke="#000" stroke-width="3.5" stroke-linecap="round"/><line x1="43.10" y1="68.40" x2="45.10" y2="65.20" stroke="#000" stroke-width="3.5" stroke-linecap="round"/><line x1="45.10" y1="65.20" x2="47.50" y2="65.60" stroke="#000" stroke-width="3.5" stroke-linecap="round"/><line x1="47.50" y1="65.60" x2="49.90" y2="67.20" stroke="#000" stroke-width="3.5" stroke-linecap="round"/><line x1="49.90" y1="67.20" x2="51.50" y2="71.60" stroke="#000" stroke-width="3.5" stroke-linecap="round"/><line x1="51.50" y1="71.60" x2="53.50" y2="70.00" stroke="#000" stroke-width="3.5" stroke-linecap="round"/><line x1="53.50" y1="70.00" x2="55.10" y2="72.80" stroke="#000" stroke-width="3.5" stroke-linecap="round"/><line x1="55.10" y1="72.80" x2="57.80" y2="68.40" stroke="#000" stroke-width="3.5" stroke-linecap="round"/><line x1="57.80" y1="68.40" x2="60.20" y2="64.80" stroke="#000" stroke-width="3.5" stroke-linecap="round"/><line x1="60.20" y1="64.80" x2="62.20" y2="62.40" stroke="#000" stroke-width="3.5" stroke-linecap="round"/><line x1="62.20" y1="62.40" x2="64.20" y2="63.60" stroke="#000" stroke-width="3.5" stroke-linecap="round"/><line x1="64.20" y1="63.60" x2="66.20" y2="62.40" stroke="#000" stroke-width="3.5" stroke-linecap="round"/><line x1="67.40" y1="69.20" x2="69.80" y2="70.80" stroke="#000" stroke-width="3.5" stroke-linecap="round"/><line x1="69.80" y1="70.80" x2="72.20" y2="70.00" stroke="#000" stroke-width="3.5" stroke-linecap="round"/><line x1="72.20" y1="70.00" x2="74.60" y2="71.20" stroke="#000" stroke-width="3.5" stroke-linecap="round"/><line x1="74.60" y1="71.20" x2="76.60" y2="72.40" stroke="#000" stroke-width="3.5" stroke-linecap="round"/><line x1="78.20" y1="66.80" x2="80.20" y2="67.20" stroke="#000" stroke-width="3.5" stroke-linecap="round"/><line x1="81.40" y1="74.80" x2="83.40" y2="76.40" stroke="#000" stroke-width="3.5" stroke-linecap="round"/><line x1="83.40" y1="76.40" x2="85.40" y2="75.20" stroke="#000" stroke-width="3.5" stroke-linecap="round"/><line x1="91.00" y1="69.10" x2="93.10" y2="68.70" stroke="#000" stroke-width="2.6" stroke-linecap="round"/><line x1="93.10" y1="68.70" x2="95.20" y2="69.50" stroke="#000" stroke-width="2.6" stroke-linecap="round"/><line x1="95.20" y1="69.50" x2="97.40" y2="70.80" stroke="#000" stroke-width="2.6" stroke-linecap="round"/><line x1="97.40" y1="70.80" x2="99.50" y2="72.30" stroke="#000" stroke-width="2.6" stroke-linecap="round"/><line x1="99.50" y1="72.30" x2="101.60" y2="71.20" stroke="#000" stroke-width="2.6" stroke-linecap="round"/><line x1="101.60" y1="71.20" x2="103.80" y2="70.80" stroke="#000" stroke-width="2.6" stroke-linecap="round"/><line x1="105.30" y1="66.50" x2="107.00" y2="68.00" stroke="#000" stroke-width="2.6" stroke-linecap="round"/><line x1="111.70" y1="82.30" x2="113.40" y2="81.50" stroke="#000" stroke-width="2.6" stroke-linecap="round"/><line x1="118.70" y1="64.40" x2="120.80" y2="64.40" stroke="#000" stroke-width="2.6" stroke-linecap="round"/><line x1="120.80" y1="64.40" x2="123.00" y2="63.80" stroke="#000" stroke-width="2.6" stroke-linecap="round"/><line x1="123.00" y1="63.80" x2="124.40" y2="63.10" stroke="#000" stroke-width="2.6" stroke-linecap="round"/><line x1="126.20" y1="68.00" x2="128.30" y2="68.00" stroke="#000" stroke-width="2.6" stroke-linecap="round"/><line x1="136.80" y1="77.60" x2="138.30" y2="79.30" stroke="#000" stroke-width="2.6" stroke-linecap="round"/><line x1="151.70" y1="72.90" x2="153.70" y2="72.30" stroke="#000" stroke-width="2.6" stroke-linecap="round"/><line x1="156.00" y1="69.10" x2="158.10" y2="68.70" stroke="#000" stroke-width="2.6" stroke-linecap="round"/><line x1="158.10" y1="68.70" x2="160.30" y2="70.20" stroke="#000" stroke-width="2.6" stroke-linecap="round"/><line x1="160.30" y1="70.20" x2="162.20" y2="71.70" stroke="#000" stroke-width="2.6" stroke-linecap="round"/><line x1="162.20" y1="71.70" x2="163.90" y2="70.20" stroke="#000" stroke-width="2.6" stroke-linecap="round"/><circle cx="13.20" cy="71.60" r="1.85" fill="#000"/><circle cx="14.80" cy="76.80" r="1.85" fill="#000"/><circle cx="16.00" cy="71.20" r="1.85" fill="#000"/><circle cx="18.00" cy="72.00" r="1.85" fill="#000"/><circle cx="20.00" cy="74.00" r="1.85" fill="#000"/><circle cx="21.60" cy="80.40" r="1.85" fill="#000"/><circle cx="23.60" cy="82.30" r="1.85" fill="#000"/><circle cx="25.20" cy="74.00" r="1.85" fill="#000"/><circle cx="27.20" cy="78.00" r="1.85" fill="#000"/><circle cx="28.80" cy="67.20" r="1.85" fill="#000"/><circle cx="30.40" cy="70.40" r="1.85" fill="#000"/><circle cx="32.40" cy="71.60" r="1.85" fill="#000"/><circle cx="34.80" cy="70.00" r="1.85" fill="#000"/><circle cx="37.20" cy="67.60" r="1.85" fill="#000"/><circle cx="38.80" cy="70.00" r="1.85" fill="#000"/><circle cx="41.20" cy="71.20" r="1.85" fill="#000"/><circle cx="43.10" cy="68.40" r="1.85" fill="#000"/><circle cx="45.10" cy="65.20" r="1.85" fill="#000"/><circle cx="47.50" cy="65.60" r="1.85" fill="#000"/><circle cx="49.90" cy="67.20" r="1.85" fill="#000"/><circle cx="51.50" cy="71.60" r="1.85" fill="#000"/><circle cx="53.50" cy="70.00" r="1.85" fill="#000"/><circle cx="55.10" cy="72.80" r="1.85" fill="#000"/><circle cx="57.80" cy="68.40" r="1.85" fill="#000"/><circle cx="60.20" cy="64.80" r="1.85" fill="#000"/><circle cx="62.20" cy="62.40" r="1.85" fill="#000"/><circle cx="64.20" cy="63.60" r="1.85" fill="#000"/><circle cx="66.20" cy="62.40" r="1.85" fill="#000"/><circle cx="67.40" cy="69.20" r="1.85" fill="#000"/><circle cx="69.80" cy="70.80" r="1.85" fill="#000"/><circle cx="72.20" cy="70.00" r="1.85" fill="#000"/><circle cx="74.60" cy="71.20" r="1.85" fill="#000"/><circle cx="76.60" cy="72.40" r="1.85" fill="#000"/><circle cx="78.20" cy="66.80" r="1.85" fill="#000"/><circle cx="80.20" cy="67.20" r="1.85" fill="#000"/><circle cx="81.40" cy="74.80" r="1.85" fill="#000"/><circle cx="83.40" cy="76.40" r="1.85" fill="#000"/><circle cx="85.40" cy="75.20" r="1.85" fill="#000"/><circle cx="87.10" cy="28.60" r="1.4" fill="#000"/><circle cx="89.00" cy="74.00" r="1.4" fill="#000"/><circle cx="91.00" cy="69.10" r="1.4" fill="#000"/><circle cx="93.10" cy="68.70" r="1.4" fill="#000"/><circle cx="95.20" cy="69.50" r="1.4" fill="#000"/><circle cx="97.40" cy="70.80" r="1.4" fill="#000"/><circle cx="99.50" cy="72.30" r="1.4" fill="#000"/><circle cx="101.60" cy="71.20" r="1.4" fill="#000"/><circle cx="103.80" cy="70.80" r="1.4" fill="#000"/><circle cx="105.30" cy="66.50" r="1.4" fill="#000"/><circle cx="107.00" cy="68.00" r="1.4" fill="#000"/><circle cx="108.50" cy="81.30" r="1.4" fill="#000"/><circle cx="110.20" cy="43.10" r="1.4" fill="#000"/><circle cx="111.70" cy="82.30" r="1.4" fill="#000"/><circle cx="113.40" cy="81.50" r="1.4" fill="#000"/><circle cx="115.50" cy="69.50" r="1.4" fill="#000"/><circle cx="117.00" cy="67.00" r="1.4" fill="#000"/><circle cx="118.70" cy="64.40" r="1.4" fill="#000"/><circle cx="120.80" cy="64.40" r="1.4" fill="#000"/><circle cx="123.00" cy="63.80" r="1.4" fill="#000"/><circle cx="124.40" cy="63.10" r="1.4" fill="#000"/><circle cx="126.20" cy="68.00" r="1.4" fill="#000"/><circle cx="128.30" cy="68.00" r="1.4" fill="#000"/><circle cx="129.30" cy="72.90" r="1.4" fill="#000"/><circle cx="131.50" cy="75.90" r="1.4" fill="#000"/><circle cx="133.00" cy="62.70" r="1.4" fill="#000"/><circle cx="135.10" cy="72.90" r="1.4" fill="#000"/><circle cx="136.80" cy="77.60" r="1.4" fill="#000"/><circle cx="138.30" cy="79.30" r="1.4" fill="#000"/><circle cx="140.40" cy="81.50" r="1.4" fill="#000"/><circle cx="141.90" cy="74.00" r="1.4" fill="#000"/><circle cx="143.60" cy="105.30" r="1.4" fill="#000"/><circle cx="145.80" cy="71.70" r="1.4" fill="#000"/><circle cx="147.30" cy="68.00" r="1.4" fill="#000"/><circle cx="149.60" cy="71.20" r="1.4" fill="#000"/><circle cx="151.70" cy="72.90" r="1.4" fill="#000"/><circle cx="153.70" cy="72.30" r="1.4" fill="#000"/><circle cx="156.00" cy="69.10" r="1.4" fill="#000"/><circle cx="158.10" cy="68.70" r="1.4" fill="#000"/><circle cx="160.30" cy="70.20" r="1.4" fill="#000"/><circle cx="162.20" cy="71.70" r="1.4" fill="#000"/><circle cx="163.90" cy="70.20" r="1.4" fill="#000"/><text transform="translate(26.00,121.50) rotate(-90)" font-size="6.65" text-anchor="end" fill="#3a3a3a" font-family="Liberation Sans">13. 03. 2015</text><text transform="translate(38.30,121.50) rotate(-90)" font-size="6.65" text-anchor="end" fill="#3a3a3a" font-family="Liberation Sans">16. 04. 2015</text><text transform="translate(50.80,121.50) rotate(-90)" font-size="6.65" text-anchor="end" fill="#3a3a3a" font-family="Liberation Sans">22. 05. 2015</text><text transform="translate(63.30,121.50) rotate(-90)" font-size="6.65" text-anchor="end" fill="#3a3a3a" font-family="Liberation Sans">28. 07. 2015</text><text transform="translate(76.00,121.50) rotate(-90)" font-size="6.65" text-anchor="end" fill="#3a3a3a" font-family="Liberation Sans">23. 11. 2015</text><text transform="translate(88.10,121.50) rotate(-90)" font-size="6.65" text-anchor="end" fill="#3a3a3a" font-family="Liberation Sans">17. 03. 2016</text><text transform="translate(100.30,121.50) rotate(-90)" font-size="6.65" text-anchor="end" fill="#3a3a3a" font-family="Liberation Sans">24. 08. 2016</text><text transform="translate(113.10,121.50) rotate(-90)" font-size="6.65" text-anchor="end" fill="#3a3a3a" font-family="Liberation Sans">8.11.2016</text><text transform="translate(125.30,121.50) rotate(-90)" font-size="6.65" text-anchor="end" fill="#3a3a3a" font-family="Liberation Sans">12. 01. 2017</text><text transform="translate(137.50,121.50) rotate(-90)" font-size="6.65" text-anchor="end" fill="#3a3a3a" font-family="Liberation Sans">23. 06. 2017</text><text transform="translate(149.60,121.50) rotate(-90)" font-size="6.65" text-anchor="end" fill="#3a3a3a" font-family="Liberation Sans">29. 08. 2017</text><text transform="translate(162.30,121.50) rotate(-90)" font-size="6.65" text-anchor="end" fill="#3a3a3a" font-family="Liberation Sans">27. 11. 2017</text></svg><div style="position:absolute;left:502px;top:384.7px;white-space:nowrap;font-size:6.35px;color:#333;-webkit-text-stroke:0">UCL=421,50</div><div style="position:absolute;left:502px;top:392.5px;white-space:nowrap;font-size:6.35px;color:#333;-webkit-text-stroke:0">&mu;<sub style='font-size:4px'>0</sub>=419,50</div><div style="position:absolute;left:502px;top:400.6px;white-space:nowrap;font-size:6.35px;color:#333;-webkit-text-stroke:0">LCL=417,50</div><div style="position:absolute;left:307.5px;top:401.8px;white-space:nowrap;font-size:6.3px;color:#333;transform:rotate(-90deg);transform-origin:0 0;-webkit-text-stroke:0">Mean of b</div><div style="position:absolute;left:407.6px;top:485px;white-space:nowrap;font-size:6.7px;color:#333;-webkit-text-stroke:0">Date</div><div style="position:absolute;left:299.3px;top:498.8px;white-space:nowrap;font-size:4.95px;color:#222;-webkit-text-stroke:0.05px #222">Note: The sigma was calculated using the range.</div><div style="position:absolute;left:287.2px;top:512.3px;width:261.40000000000003px;height:12.2px;background:#e2e7f2;border-top:1px solid #c0c8dc"></div><div style="position:absolute;left:496px;top:513px;width:0.7px;height:11px;background:#c0c8dc"></div><svg style="position:absolute;left:499px;top:515.5px" width="7" height="7"><polygon points="0.3,3.3 3.5,0.3 6.7,3.3" fill="#2a8ae0"/><rect x="1.5" y="3" width="4" height="3.7" fill="#e8f0fa"/><rect x="3" y="4" width="1.2" height="2.7" fill="#d08a20"/></svg><svg style="position:absolute;left:507.5px;top:515.5px" width="7" height="7"><rect x="0.3" y="0.3" width="6.4" height="6.2" fill="#5aa0e0"/><rect x="1" y="1" width="3" height="3" fill="#fff"/><rect x="1.2" y="1.5" width="1.2" height="1.2" fill="#e06060"/><polygon points="3.5,6 6.5,3 6.5,6" fill="#2a70c0"/></svg><div style="position:absolute;left:520.3px;top:515px;width:8px;height:7.7px;background:#fff;border:0.8px solid #b8b8b8;border-radius:1.5px"></div><svg style="position:absolute;left:531.6px;top:517px" width="5" height="3.5"><polygon points="0,0 5,0 2.5,3.5" fill="#111"/></svg><div class="ns"><div style="position:absolute;left:552px;top:12px;width:332px;height:347.5px;background:#f3f3f3;border:0.8px solid #b8b8b8"></div><div style="position:absolute;left:552px;top:12px;width:332px;height:32.6px;background:#217346"></div><div style="position:absolute;left:734px;top:12px;width:44px;height:19.5px;background:#1c633c"></div><div style="position:absolute;left:738.5px;top:19.8px;white-space:nowrap;font-size:6.3px;color:#dff0e6">Orodja za g...</div><svg style="position:absolute;left:563.5px;top:17px" width="9" height="8.5"><rect x="0.6" y="0.6" width="7.8" height="7.3" fill="none" stroke="#fff" stroke-width="1.1"/><rect x="2.2" y="0.6" width="4.6" height="2.6" fill="none" stroke="#fff" stroke-width="0.9"/><rect x="2" y="5" width="5" height="2.9" fill="#fff"/></svg><svg style="position:absolute;left:579.5px;top:16.5px" width="9" height="9"><path d="M2.5 1 L0.8 3 L2.5 5 M0.8 3 H5 A2.8 2.8 0 0 1 5 8.5 H3.5" fill="none" stroke="#fff" stroke-width="1.2"/></svg><div style="position:absolute;left:589.8px;top:18.5px;white-space:nowrap;font-size:5px;color:#fff">&#x25BE;</div><svg style="position:absolute;left:597.5px;top:16.5px" width="9" height="9"><path d="M6.5 1 L8.2 3 L6.5 5 M8.2 3 H4 A2.8 2.8 0 0 0 4 8.5 H5.5" fill="none" stroke="#6aa884" stroke-width="1.1"/></svg><div style="position:absolute;left:609px;top:18.5px;white-space:nowrap;font-size:5px;color:#6aa884">&#x25BE;</div><div style="position:absolute;left:619px;top:19.5px;width:3px;height:0.8px;background:#fff"></div><div style="position:absolute;left:619px;top:21.8px;width:3px;height:0.8px;background:#fff"></div><div style="position:absolute;left:618.6px;top:21.8px;white-space:nowrap;font-size:4px;color:#fff">&#x25BE;</div><div style="position:absolute;left:659px;top:20px;white-space:nowrap;font-size:6.05px;color:#d4e8dc">Zvezek1 - Excel</div><div style="position:absolute;left:791px;top:19px;width:9px;height:6.5px;border:0.8px solid #70ad88"></div><div style="position:absolute;left:793px;top:20.5px;width:5px;height:0.8px;background:#70ad88"></div><div style="position:absolute;left:817.5px;top:22.5px;width:7px;height:0.8px;background:#70ad88"></div><div style="position:absolute;left:843px;top:18.5px;width:6.5px;height:6.5px;border:0.8px solid #70ad88"></div><svg style="position:absolute;left:868px;top:19px" width="7" height="7"><path d="M0.5 0.5 L6.5 6.5 M6.5 0.5 L0.5 6.5" stroke="#70ad88" stroke-width="0.8"/></svg><div style="position:absolute;left:555.7px;top:35.2px;white-space:nowrap;font-size:6.3px;color:#fff;width:26px;overflow:hidden">Datoteka</div><div style="position:absolute;left:587.4px;top:35.2px;white-space:nowrap;font-size:6.3px;color:#fff;width:16px;overflow:hidden">Osnc</div><div style="position:absolute;left:606px;top:35.2px;white-space:nowrap;font-size:6.3px;color:#fff;width:15.5px;overflow:hidden">Vstav</div><div style="position:absolute;left:624.5px;top:35.2px;white-space:nowrap;font-size:6.3px;color:#fff;width:14.5px;overflow:hidden">Posti</div><div style="position:absolute;left:643.5px;top:35.2px;white-space:nowrap;font-size:6.3px;color:#fff;width:14px;overflow:hidden">Forr</div><div style="position:absolute;left:662px;top:35.2px;white-space:nowrap;font-size:6.3px;color:#fff;width:14.5px;overflow:hidden">Podi</div><div style="position:absolute;left:680px;top:35.2px;white-space:nowrap;font-size:6.3px;color:#fff;width:14.5px;overflow:hidden">Preg</div><div style="position:absolute;left:698px;top:35.2px;white-space:nowrap;font-size:6.3px;color:#fff;width:14.5px;overflow:hidden">Ogle</div><div style="position:absolute;left:716px;top:35.2px;white-space:nowrap;font-size:6.3px;color:#fff;width:15.5px;overflow:hidden">Razvi</div><div style="position:absolute;left:604.8px;top:33.5px;width:0.7px;height:10px;background:#8cc0a0"></div><div style="position:absolute;left:622.5px;top:33.5px;width:0.7px;height:10px;background:#8cc0a0"></div><div style="position:absolute;left:641.5px;top:33.5px;width:0.7px;height:10px;background:#8cc0a0"></div><div style="position:absolute;left:659.8px;top:33.5px;width:0.7px;height:10px;background:#8cc0a0"></div><div style="position:absolute;left:678.2px;top:33.5px;width:0.7px;height:10px;background:#8cc0a0"></div><div style="position:absolute;left:696.5px;top:33.5px;width:0.7px;height:10px;background:#8cc0a0"></div><div style="position:absolute;left:713.8px;top:33.5px;width:0.7px;height:10px;background:#8cc0a0"></div><div style="position:absolute;left:733.7px;top:31px;width:21px;height:13.8px;background:#f3f3f3"></div><div style="position:absolute;left:735.6px;top:35.2px;white-space:nowrap;font-size:6.3px;color:#217346">Na&#x10D;rt</div><div style="position:absolute;left:757.8px;top:35.2px;white-space:nowrap;font-size:6.3px;color:#fff">Oblika</div><div style="position:absolute;left:778.8px;top:33.5px;width:0.7px;height:10px;background:#8cc0a0"></div><svg style="position:absolute;left:784px;top:33.5px" width="6" height="9"><circle cx="3" cy="3.2" r="2.4" fill="none" stroke="#fff" stroke-width="0.8"/><line x1="2" y1="6.5" x2="4" y2="6.5" stroke="#fff" stroke-width="0.8"/><line x1="2.2" y1="8" x2="3.8" y2="8" stroke="#fff" stroke-width="0.8"/></svg><div style="position:absolute;left:793.6px;top:35.2px;white-space:nowrap;font-size:6.3px;color:#fff">Povejte ...</div><div style="position:absolute;left:822.4px;top:32px;width:52.2px;height:12.6px;background:#1c633c"></div><svg style="position:absolute;left:826px;top:33.5px" width="9" height="10"><circle cx="4" cy="3" r="2.3" fill="none" stroke="#fff" stroke-width="0.9"/><path d="M0.5 9.5 Q0.8 5.6 4 5.6 Q6 5.6 7 7" fill="none" stroke="#fff" stroke-width="0.9"/><line x1="6.5" y1="7" x2="6.5" y2="10" stroke="#fff" stroke-width="0.8"/><line x1="5" y1="8.5" x2="8" y2="8.5" stroke="#fff" stroke-width="0.8"/></svg><div style="position:absolute;left:835.8px;top:35.2px;white-space:nowrap;font-size:6.3px;color:#fff">Skupna raba</div><div style="position:absolute;left:552.8px;top:44.6px;width:330.4px;height:48px;background:#f3f3f3;border-bottom:0.8px solid #d4d4d4"></div><div style="position:absolute;left:646.5px;top:47px;width:0.7px;height:43px;background:#d8d8d8"></div><div style="position:absolute;left:703.6px;top:47px;width:0.7px;height:43px;background:#d8d8d8"></div><div style="position:absolute;left:778.6px;top:47px;width:0.7px;height:43px;background:#d8d8d8"></div><div style="position:absolute;left:828.7px;top:47px;width:0.7px;height:43px;background:#d8d8d8"></div><div style="position:absolute;left:862.2px;top:47px;width:0.7px;height:43px;background:#d8d8d8"></div><svg style="position:absolute;left:557px;top:48px" width="8" height="9"><rect x="0.5" y="3" width="1.8" height="5.5" fill="#2e75b6"/><rect x="3" y="0.5" width="1.8" height="8" fill="#f0b030"/><rect x="5.5" y="3.5" width="1.8" height="2" fill="#555"/><path d="M5 6 L6.4 8.5 L7.8 6" fill="#3a9a50"/></svg><div style="position:absolute;left:566.5px;top:49.5px;white-space:nowrap;font-size:6.3px;color:#333">Dodaj element grafikona</div><div style="position:absolute;left:637.5px;top:49.8px;white-space:nowrap;font-size:5px;color:#555">&#x25BE;</div><div style="position:absolute;left:557.5px;top:60px;width:7px;height:8px;background:#fff;border:0.7px solid #888"></div><div style="position:absolute;left:558.3px;top:61.7px;white-space:nowrap;font-size:4px;color:#444">dk</div><div style="position:absolute;left:566.5px;top:61px;white-space:nowrap;font-size:6.3px;color:#333">Hitra postavitev</div><div style="position:absolute;left:612.5px;top:61.3px;white-space:nowrap;font-size:5px;color:#555">&#x25BE;</div><div style="position:absolute;left:552.8px;top:86.3px;white-space:nowrap;font-size:6.1px;color:#555;margin-top:0.6px;width:93px;text-align:center">Postavitve grafikona</div><svg style="position:absolute;left:655px;top:48.5px" width="16" height="15"><circle cx="4.5" cy="3" r="1.7" fill="#f0a840"/><circle cx="11" cy="2.8" r="1.7" fill="#40a080"/><circle cx="2" cy="8.5" r="1.8" fill="#e04830"/><circle cx="13.5" cy="8" r="1.7" fill="#3a70c0"/><circle cx="7.5" cy="12" r="1.8" fill="#f07020"/></svg><svg style="position:absolute;left:682px;top:48.5px" width="16" height="16"><rect x="1" y="5" width="3" height="10" fill="#909090"/><rect x="4.5" y="2" width="3" height="13" fill="#b0b0b0"/><rect x="8" y="5" width="3" height="10" fill="#909090"/><path d="M14.5 3 L8 11 L9 12.5 L15.5 4.5 Z" fill="#555"/><ellipse cx="8" cy="12.5" rx="2" ry="1.5" fill="#3a80d0"/></svg><div style="position:absolute;left:646.5px;top:67.8px;white-space:nowrap;font-size:6.3px;color:#333;width:33.5px;text-align:center">Spremeni</div><div style="position:absolute;left:646.5px;top:76.5px;white-space:nowrap;font-size:6.3px;color:#333;width:33.5px;text-align:center">barve &#x25BE;</div><div style="position:absolute;left:676px;top:67.8px;white-space:nowrap;font-size:6.3px;color:#333;width:27px;text-align:center">Hitri</div><div style="position:absolute;left:676px;top:76.5px;white-space:nowrap;font-size:6.3px;color:#333;width:27px;text-align:center">slogi &#x25BE;</div><div style="position:absolute;left:646.5px;top:86.3px;white-space:nowrap;font-size:6.1px;color:#555;margin-top:0.6px;width:57px;text-align:center">Slogi grafikona</div><svg style="position:absolute;left:719.5px;top:48.5px" width="17" height="14"><rect x="0.5" y="0.5" width="16" height="13" fill="#fff" stroke="#8a8a8a" stroke-width="0.8"/><rect x="0.5" y="0.5" width="16" height="2.5" fill="#8a8a8a"/><line x1="0.5" y1="5.5" x2="16.5" y2="5.5" stroke="#b8b8b8" stroke-width="0.5"/><line x1="0.5" y1="8.5" x2="16.5" y2="8.5" stroke="#b8b8b8" stroke-width="0.5"/><line x1="0.5" y1="11" x2="16.5" y2="11" stroke="#b8b8b8" stroke-width="0.5"/><line x1="5.5" y1="3" x2="5.5" y2="13.5" stroke="#b8b8b8" stroke-width="0.5"/><line x1="10.5" y1="3" x2="10.5" y2="13.5" stroke="#b8b8b8" stroke-width="0.5"/><path d="M9.5 5 H13.5 V12 H9.5" fill="none" stroke="#f08a3a" stroke-width="0.8"/><path d="M3.5 11.5 A3.5 3.5 0 0 1 8.5 5" fill="none" stroke="#2e75c6" stroke-width="1.1"/><path d="M7.2 3.8 L9.2 5 L7.4 6.5" fill="none" stroke="#2e75c6" stroke-width="0.9"/><path d="M9 8.5 A3 3 0 0 1 5.5 12" fill="none" stroke="#2e75c6" stroke-width="1"/></svg><svg style="position:absolute;left:755px;top:48.5px" width="17" height="16"><rect x="0.5" y="0.5" width="14" height="13" fill="#fff" stroke="#8a8a8a" stroke-width="0.8"/><rect x="0.5" y="0.5" width="14" height="2.5" fill="#8a8a8a"/><line x1="0.5" y1="5.5" x2="14.5" y2="5.5" stroke="#b8b8b8" stroke-width="0.5"/><line x1="0.5" y1="8.5" x2="14.5" y2="8.5" stroke="#b8b8b8" stroke-width="0.5"/><line x1="0.5" y1="11" x2="14.5" y2="11" stroke="#b8b8b8" stroke-width="0.5"/><line x1="5" y1="3" x2="5" y2="13.5" stroke="#b8b8b8" stroke-width="0.5"/><line x1="10" y1="3" x2="10" y2="13.5" stroke="#b8b8b8" stroke-width="0.5"/><rect x="5" y="5.5" width="5" height="5.5" fill="none" stroke="#f0a060" stroke-width="0.8"/><rect x="8.3" y="8.3" width="8.2" height="7.2" fill="#ececec" stroke="#777" stroke-width="0.8"/><path d="M10 14.5 V12 L12 10.5 L14.5 12 V14.5" fill="none" stroke="#777" stroke-width="0.8"/></svg><div style="position:absolute;left:703.6px;top:67.8px;white-space:nowrap;font-size:6.3px;color:#333;width:48px;text-align:center">Preklopi</div><div style="position:absolute;left:703.6px;top:76.5px;white-space:nowrap;font-size:6.3px;color:#333;width:48px;text-align:center">vrstico/stolpec</div><div style="position:absolute;left:751px;top:67.8px;white-space:nowrap;font-size:6.3px;color:#333;width:24px;text-align:center">Izberi</div><div style="position:absolute;left:750px;top:76.5px;white-space:nowrap;font-size:6.3px;color:#333;width:26px;text-align:center">podatke</div><div style="position:absolute;left:703.6px;top:86.3px;white-space:nowrap;font-size:6.1px;color:#555;margin-top:0.6px;width:75px;text-align:center">Podatki</div><svg style="position:absolute;left:796.5px;top:48.5px" width="14" height="15"><rect x="0.5" y="5" width="3" height="9.5" fill="#2e75b6"/><rect x="5" y="0.5" width="3" height="14" fill="#f2c060"/><rect x="9.5" y="3" width="3" height="11.5" fill="#808080"/></svg><div style="position:absolute;left:778.6px;top:67.8px;white-space:nowrap;font-size:6.3px;color:#333;width:50px;text-align:center">Spremeni</div><div style="position:absolute;left:778.6px;top:76.5px;white-space:nowrap;font-size:6.3px;color:#333;width:50px;text-align:center">vrsto grafikona</div><div style="position:absolute;left:778.6px;top:86.3px;white-space:nowrap;font-size:6.1px;color:#555;margin-top:0.6px;width:50px;text-align:center">Vrsta</div><svg style="position:absolute;left:837.5px;top:48.5px" width="16" height="15"><rect x="0.5" y="0.5" width="15" height="11.5" fill="#fff" stroke="#808080" stroke-width="0.8"/><rect x="4" y="4" width="2.2" height="6" fill="none" stroke="#777" stroke-width="0.6"/><rect x="6.5" y="2.5" width="2.2" height="7.5" fill="none" stroke="#777" stroke-width="0.6"/><rect x="9" y="5" width="2.2" height="5" fill="none" stroke="#777" stroke-width="0.6"/><path d="M3 12 L7 12 L6 14.5" fill="none" stroke="#777" stroke-width="0.7"/></svg><div style="position:absolute;left:828.7px;top:67.8px;white-space:nowrap;font-size:6.3px;color:#333;width:33.5px;text-align:center">Premakni</div><div style="position:absolute;left:828.7px;top:76.5px;white-space:nowrap;font-size:6.3px;color:#333;width:33.5px;text-align:center">grafikon</div><div style="position:absolute;left:828.7px;top:86.3px;white-space:nowrap;font-size:6.1px;color:#555;margin-top:0.6px;width:33.5px;text-align:center">Mesto</div><svg style="position:absolute;left:873px;top:87px" width="6" height="4"><polyline points="0.5,3.5 3,1 5.5,3.5" fill="none" stroke="#444" stroke-width="0.9"/></svg><div style="position:absolute;left:552.8px;top:92.6px;width:330.4px;height:26.4px;background:#e6e6e6"></div><div style="position:absolute;left:555.7px;top:100.2px;width:53.5px;height:12.5px;background:#fff;border:0.7px solid #c6c6c6"></div><div style="position:absolute;left:558.8px;top:102.6px;white-space:nowrap;font-size:7.7px;color:#333">Grafikon 1</div><div style="position:absolute;left:602.5px;top:104.5px;white-space:nowrap;font-size:5.5px;color:#444">&#x25BE;</div><div style="position:absolute;left:617.3px;top:102.8px;width:0.9px;height:0.9px;background:#999"></div><div style="position:absolute;left:617.3px;top:105.1px;width:0.9px;height:0.9px;background:#999"></div><div style="position:absolute;left:617.3px;top:107.39999999999999px;width:0.9px;height:0.9px;background:#999"></div><div style="position:absolute;left:626.2px;top:100.2px;width:58.2px;height:12.5px;background:#fff;border:0.7px solid #c6c6c6"></div><div style="position:absolute;left:633.5px;top:102.3px;white-space:nowrap;font-size:7px;color:#c0c0c0">&#x2715;</div><div style="position:absolute;left:651.5px;top:102.3px;white-space:nowrap;font-size:7.5px;color:#c0c0c0">&#x2713;</div><div style="position:absolute;left:671.5px;top:101.8px;white-space:nowrap;font-size:7.5px;color:#555;font-family:Liberation Serif"><i>f</i><span style='font-size:4.5px'>x</span></div><div style="position:absolute;left:686.6px;top:100.2px;width:193.4px;height:12.5px;background:#fff;border:0.7px solid #c6c6c6"></div><svg style="position:absolute;left:874.5px;top:104.5px" width="5" height="3"><polyline points="0.4,0.4 2.5,2.5 4.6,0.4" fill="none" stroke="#444" stroke-width="0.8"/></svg><div style="position:absolute;left:552.8px;top:118.9px;width:321px;height:9.7px;background:#e6e6e6;border-bottom:0.7px solid #c0c0c0"></div><svg style="position:absolute;left:558px;top:120.5px" width="8" height="7"><polygon points="7.5,0.5 7.5,6.5 1.5,6.5" fill="#b8b8b8"/></svg><div style="position:absolute;left:568px;top:120.3px;white-space:nowrap;font-size:7.8px;color:#333;width:38.60000000000002px;text-align:center">A</div><div style="position:absolute;left:606.3000000000001px;top:119.5px;width:0.6px;height:9px;background:#c6c6c6"></div><div style="position:absolute;left:606.6px;top:120.3px;white-space:nowrap;font-size:7.8px;color:#333;width:38.10000000000002px;text-align:center">B</div><div style="position:absolute;left:644.4000000000001px;top:119.5px;width:0.6px;height:9px;background:#c6c6c6"></div><div style="position:absolute;left:644.7px;top:120.3px;white-space:nowrap;font-size:7.8px;color:#333;width:38.799999999999955px;text-align:center">C</div><div style="position:absolute;left:683.2px;top:119.5px;width:0.6px;height:9px;background:#c6c6c6"></div><div style="position:absolute;left:683.5px;top:120.3px;white-space:nowrap;font-size:7.8px;color:#333;width:39.0px;text-align:center">D</div><div style="position:absolute;left:722.2px;top:119.5px;width:0.6px;height:9px;background:#c6c6c6"></div><div style="position:absolute;left:722.5px;top:120.3px;white-space:nowrap;font-size:7.8px;color:#333;width:37.799999999999955px;text-align:center">E</div><div style="position:absolute;left:760.0px;top:119.5px;width:0.6px;height:9px;background:#c6c6c6"></div><div style="position:absolute;left:760.3px;top:120.3px;white-space:nowrap;font-size:7.8px;color:#333;width:39.200000000000045px;text-align:center">F</div><div style="position:absolute;left:799.2px;top:119.5px;width:0.6px;height:9px;background:#c6c6c6"></div><div style="position:absolute;left:799.5px;top:120.3px;white-space:nowrap;font-size:7.8px;color:#333;width:38.10000000000002px;text-align:center">G</div><div style="position:absolute;left:837.3000000000001px;top:119.5px;width:0.6px;height:9px;background:#c6c6c6"></div><div style="position:absolute;left:837.6px;top:120.3px;white-space:nowrap;font-size:7.8px;color:#333;width:38.10000000000002px;text-align:center">H</div><div style="position:absolute;left:875.4000000000001px;top:119.5px;width:0.6px;height:9px;background:#c6c6c6"></div><div style="position:absolute;left:567.6px;top:119.5px;width:0.6px;height:9px;background:#c6c6c6"></div><div style="position:absolute;left:552.8px;top:128.6px;width:15px;height:205px;background:#e6e6e6;border-right:0.7px solid #c0c0c0"></div><div style="position:absolute;left:553.5px;top:130.1px;white-space:nowrap;font-size:8.4px;color:#333;width:14px;text-align:center">44</div><div style="position:absolute;left:553.3px;top:139.2px;width:14.3px;height:0.5px;background:#d0d0d0"></div><div style="position:absolute;left:553.5px;top:140.35px;white-space:nowrap;font-size:8.4px;color:#333;width:14px;text-align:center">45</div><div style="position:absolute;left:553.3px;top:149.45px;width:14.3px;height:0.5px;background:#d0d0d0"></div><div style="position:absolute;left:553.5px;top:150.6px;white-space:nowrap;font-size:8.4px;color:#333;width:14px;text-align:center">46</div><div style="position:absolute;left:553.3px;top:159.7px;width:14.3px;height:0.5px;background:#d0d0d0"></div><div style="position:absolute;left:553.5px;top:160.85px;white-space:nowrap;font-size:8.4px;color:#333;width:14px;text-align:center">47</div><div style="position:absolute;left:553.3px;top:169.95px;width:14.3px;height:0.5px;background:#d0d0d0"></div><div style="position:absolute;left:553.5px;top:171.1px;white-space:nowrap;font-size:8.4px;color:#333;width:14px;text-align:center">48</div><div style="position:absolute;left:553.3px;top:180.2px;width:14.3px;height:0.5px;background:#d0d0d0"></div><div style="position:absolute;left:553.5px;top:181.35px;white-space:nowrap;font-size:8.4px;color:#333;width:14px;text-align:center">49</div><div style="position:absolute;left:553.3px;top:190.45px;width:14.3px;height:0.5px;background:#d0d0d0"></div><div style="position:absolute;left:553.5px;top:191.6px;white-space:nowrap;font-size:8.4px;color:#333;width:14px;text-align:center">50</div><div style="position:absolute;left:553.3px;top:200.7px;width:14.3px;height:0.5px;background:#d0d0d0"></div><div style="position:absolute;left:553.5px;top:201.85px;white-space:nowrap;font-size:8.4px;color:#333;width:14px;text-align:center">51</div><div style="position:absolute;left:553.3px;top:210.95px;width:14.3px;height:0.5px;background:#d0d0d0"></div><div style="position:absolute;left:553.5px;top:212.1px;white-space:nowrap;font-size:8.4px;color:#333;width:14px;text-align:center">52</div><div style="position:absolute;left:553.3px;top:221.2px;width:14.3px;height:0.5px;background:#d0d0d0"></div><div style="position:absolute;left:553.5px;top:222.35px;white-space:nowrap;font-size:8.4px;color:#333;width:14px;text-align:center">53</div><div style="position:absolute;left:553.3px;top:231.45px;width:14.3px;height:0.5px;background:#d0d0d0"></div><div style="position:absolute;left:553.5px;top:232.6px;white-space:nowrap;font-size:8.4px;color:#333;width:14px;text-align:center">54</div><div style="position:absolute;left:553.3px;top:241.7px;width:14.3px;height:0.5px;background:#d0d0d0"></div><div style="position:absolute;left:553.5px;top:242.85px;white-space:nowrap;font-size:8.4px;color:#333;width:14px;text-align:center">55</div><div style="position:absolute;left:553.3px;top:251.95px;width:14.3px;height:0.5px;background:#d0d0d0"></div><div style="position:absolute;left:553.5px;top:253.1px;white-space:nowrap;font-size:8.4px;color:#333;width:14px;text-align:center">56</div><div style="position:absolute;left:553.3px;top:262.2px;width:14.3px;height:0.5px;background:#d0d0d0"></div><div style="position:absolute;left:553.5px;top:263.35px;white-space:nowrap;font-size:8.4px;color:#333;width:14px;text-align:center">57</div><div style="position:absolute;left:553.3px;top:272.45000000000005px;width:14.3px;height:0.5px;background:#d0d0d0"></div><div style="position:absolute;left:553.5px;top:273.6px;white-space:nowrap;font-size:8.4px;color:#333;width:14px;text-align:center">58</div><div style="position:absolute;left:553.3px;top:282.70000000000005px;width:14.3px;height:0.5px;background:#d0d0d0"></div><div style="position:absolute;left:553.5px;top:283.85px;white-space:nowrap;font-size:8.4px;color:#333;width:14px;text-align:center">59</div><div style="position:absolute;left:553.3px;top:292.95000000000005px;width:14.3px;height:0.5px;background:#d0d0d0"></div><div style="position:absolute;left:553.5px;top:294.1px;white-space:nowrap;font-size:8.4px;color:#333;width:14px;text-align:center">60</div><div style="position:absolute;left:553.3px;top:303.20000000000005px;width:14.3px;height:0.5px;background:#d0d0d0"></div><div style="position:absolute;left:553.5px;top:304.35px;white-space:nowrap;font-size:8.4px;color:#333;width:14px;text-align:center">61</div><div style="position:absolute;left:553.3px;top:313.45000000000005px;width:14.3px;height:0.5px;background:#d0d0d0"></div><div style="position:absolute;left:553.5px;top:314.6px;white-space:nowrap;font-size:8.4px;color:#333;width:14px;text-align:center">62</div><div style="position:absolute;left:553.3px;top:323.70000000000005px;width:14.3px;height:0.5px;background:#d0d0d0"></div><div style="position:absolute;left:553.5px;top:324.85px;white-space:nowrap;font-size:8.4px;color:#333;width:14px;text-align:center">63</div><div style="position:absolute;left:553.3px;top:333.95000000000005px;width:14.3px;height:0.5px;background:#d0d0d0"></div><div style="position:absolute;left:873.8px;top:119px;width:10px;height:214.5px;background:#e6e6e6"></div><div style="position:absolute;left:874.6px;top:120px;width:7.3px;height:8px;background:#fff;border:0.6px solid #c0c0c0"></div><svg style="position:absolute;left:876px;top:122.5px" width="5" height="3"><polygon points="0,3 2.5,0 5,3" fill="#555"/></svg><div style="position:absolute;left:874.6px;top:263px;width:7.3px;height:62px;background:#fff;border:0.6px solid #c8c8c8"></div><div style="position:absolute;left:874.6px;top:325.5px;width:7.3px;height:7.5px;background:#fff;border:0.6px solid #c0c0c0"></div><svg style="position:absolute;left:876px;top:328px" width="5" height="3"><polygon points="0,0 2.5,3 5,0" fill="#555"/></svg><div style="position:absolute;left:568.2px;top:128.6px;width:304.5px;height:204.2px;background:#fff;border:0.7px solid #cfcfcf"></div><svg style="position:absolute;left:0;top:0" width="901" height="563"><line x1="590.20" y1="152.4" x2="590.20" y2="297.3" stroke="#dedede" stroke-width="0.7"/><line x1="620.35" y1="152.4" x2="620.35" y2="297.3" stroke="#dedede" stroke-width="0.7"/><line x1="650.50" y1="152.4" x2="650.50" y2="297.3" stroke="#dedede" stroke-width="0.7"/><line x1="680.65" y1="152.4" x2="680.65" y2="297.3" stroke="#dedede" stroke-width="0.7"/><line x1="710.80" y1="152.4" x2="710.80" y2="297.3" stroke="#dedede" stroke-width="0.7"/><line x1="740.95" y1="152.4" x2="740.95" y2="297.3" stroke="#dedede" stroke-width="0.7"/><line x1="771.10" y1="152.4" x2="771.10" y2="297.3" stroke="#dedede" stroke-width="0.7"/><line x1="801.25" y1="152.4" x2="801.25" y2="297.3" stroke="#dedede" stroke-width="0.7"/><line x1="831.40" y1="152.4" x2="831.40" y2="297.3" stroke="#dedede" stroke-width="0.7"/><line x1="861.55" y1="152.4" x2="861.55" y2="297.3" stroke="#dedede" stroke-width="0.7"/><line x1="590.2" y1="152.40" x2="861.6" y2="152.40" stroke="#dedede" stroke-width="0.7"/><line x1="590.2" y1="168.50" x2="861.6" y2="168.50" stroke="#dedede" stroke-width="0.7"/><line x1="590.2" y1="184.60" x2="861.6" y2="184.60" stroke="#dedede" stroke-width="0.7"/><line x1="590.2" y1="200.70" x2="861.6" y2="200.70" stroke="#dedede" stroke-width="0.7"/><line x1="590.2" y1="216.80" x2="861.6" y2="216.80" stroke="#dedede" stroke-width="0.7"/><line x1="590.2" y1="232.90" x2="861.6" y2="232.90" stroke="#dedede" stroke-width="0.7"/><line x1="590.2" y1="249.00" x2="861.6" y2="249.00" stroke="#dedede" stroke-width="0.7"/><line x1="590.2" y1="265.10" x2="861.6" y2="265.10" stroke="#dedede" stroke-width="0.7"/><line x1="590.2" y1="281.20" x2="861.6" y2="281.20" stroke="#dedede" stroke-width="0.7"/><line x1="590.2" y1="297.30" x2="861.6" y2="297.30" stroke="#dedede" stroke-width="0.7"/><line x1="590.2" y1="297.3" x2="861.6" y2="297.3" stroke="#d0d0d0" stroke-width="0.8"/><polyline fill="none" stroke="#ed7d31" stroke-width="1.5" points="609.20,162.00 610.50,162.00 612.00,162.01 613.30,162.01 614.80,162.01 634.00,162.06 635.50,162.06 637.50,162.07 643.50,162.08 646.00,162.09 654.00,162.11 655.50,162.11 657.20,162.12 665.00,162.13 666.80,162.14 668.60,162.14 673.00,162.15 678.40,162.17 684.20,162.18 705.50,162.23 710.50,162.24 716.50,162.26 717.70,162.26 719.50,162.27 736.80,162.31 749.40,162.34 760.60,162.36 778.80,162.41 790.00,162.43 804.50,162.47 815.00,162.49 846.80,162.57 859.20,162.60"/><circle cx="609.20" cy="162.00" r="1.9" fill="#ed7d31"/><circle cx="610.50" cy="162.00" r="1.9" fill="#ed7d31"/><circle cx="612.00" cy="162.01" r="1.9" fill="#ed7d31"/><circle cx="613.30" cy="162.01" r="1.9" fill="#ed7d31"/><circle cx="614.80" cy="162.01" r="1.9" fill="#ed7d31"/><circle cx="634.00" cy="162.06" r="1.9" fill="#ed7d31"/><circle cx="635.50" cy="162.06" r="1.9" fill="#ed7d31"/><circle cx="637.50" cy="162.07" r="1.9" fill="#ed7d31"/><circle cx="643.50" cy="162.08" r="1.9" fill="#ed7d31"/><circle cx="646.00" cy="162.09" r="1.9" fill="#ed7d31"/><circle cx="654.00" cy="162.11" r="1.9" fill="#ed7d31"/><circle cx="655.50" cy="162.11" r="1.9" fill="#ed7d31"/><circle cx="657.20" cy="162.12" r="1.9" fill="#ed7d31"/><circle cx="665.00" cy="162.13" r="1.9" fill="#ed7d31"/><circle cx="666.80" cy="162.14" r="1.9" fill="#ed7d31"/><circle cx="668.60" cy="162.14" r="1.9" fill="#ed7d31"/><circle cx="673.00" cy="162.15" r="1.9" fill="#ed7d31"/><circle cx="678.40" cy="162.17" r="1.9" fill="#ed7d31"/><circle cx="684.20" cy="162.18" r="1.9" fill="#ed7d31"/><circle cx="705.50" cy="162.23" r="1.9" fill="#ed7d31"/><circle cx="710.50" cy="162.24" r="1.9" fill="#ed7d31"/><circle cx="716.50" cy="162.26" r="1.9" fill="#ed7d31"/><circle cx="717.70" cy="162.26" r="1.9" fill="#ed7d31"/><circle cx="719.50" cy="162.27" r="1.9" fill="#ed7d31"/><circle cx="736.80" cy="162.31" r="1.9" fill="#ed7d31"/><circle cx="749.40" cy="162.34" r="1.9" fill="#ed7d31"/><circle cx="760.60" cy="162.36" r="1.9" fill="#ed7d31"/><circle cx="778.80" cy="162.41" r="1.9" fill="#ed7d31"/><circle cx="790.00" cy="162.43" r="1.9" fill="#ed7d31"/><circle cx="804.50" cy="162.47" r="1.9" fill="#ed7d31"/><circle cx="815.00" cy="162.49" r="1.9" fill="#ed7d31"/><circle cx="846.80" cy="162.57" r="1.9" fill="#ed7d31"/><circle cx="859.20" cy="162.60" r="1.9" fill="#ed7d31"/><polyline fill="none" stroke="#5b9bd5" stroke-width="1.5" points="609.20,247.10 610.50,247.10 612.00,247.10 613.30,247.10 614.80,247.10 634.00,247.12 635.50,247.12 637.50,247.12 643.50,247.13 646.00,247.13 654.00,247.14 655.50,247.14 657.20,247.14 665.00,247.14 666.80,247.15 668.60,247.15 673.00,247.15 678.40,247.16 684.20,247.16 705.50,247.18 710.50,247.18 716.50,247.19 717.70,247.19 719.50,247.19 736.80,247.20 749.40,247.21 760.60,247.22 778.80,247.24 790.00,247.24 804.50,247.26 815.00,247.26 846.80,247.29 859.20,247.30"/><circle cx="609.20" cy="247.10" r="1.9" fill="#5b9bd5"/><circle cx="610.50" cy="247.10" r="1.9" fill="#5b9bd5"/><circle cx="612.00" cy="247.10" r="1.9" fill="#5b9bd5"/><circle cx="613.30" cy="247.10" r="1.9" fill="#5b9bd5"/><circle cx="614.80" cy="247.10" r="1.9" fill="#5b9bd5"/><circle cx="634.00" cy="247.12" r="1.9" fill="#5b9bd5"/><circle cx="635.50" cy="247.12" r="1.9" fill="#5b9bd5"/><circle cx="637.50" cy="247.12" r="1.9" fill="#5b9bd5"/><circle cx="643.50" cy="247.13" r="1.9" fill="#5b9bd5"/><circle cx="646.00" cy="247.13" r="1.9" fill="#5b9bd5"/><circle cx="654.00" cy="247.14" r="1.9" fill="#5b9bd5"/><circle cx="655.50" cy="247.14" r="1.9" fill="#5b9bd5"/><circle cx="657.20" cy="247.14" r="1.9" fill="#5b9bd5"/><circle cx="665.00" cy="247.14" r="1.9" fill="#5b9bd5"/><circle cx="666.80" cy="247.15" r="1.9" fill="#5b9bd5"/><circle cx="668.60" cy="247.15" r="1.9" fill="#5b9bd5"/><circle cx="673.00" cy="247.15" r="1.9" fill="#5b9bd5"/><circle cx="678.40" cy="247.16" r="1.9" fill="#5b9bd5"/><circle cx="684.20" cy="247.16" r="1.9" fill="#5b9bd5"/><circle cx="705.50" cy="247.18" r="1.9" fill="#5b9bd5"/><circle cx="710.50" cy="247.18" r="1.9" fill="#5b9bd5"/><circle cx="716.50" cy="247.19" r="1.9" fill="#5b9bd5"/><circle cx="717.70" cy="247.19" r="1.9" fill="#5b9bd5"/><circle cx="719.50" cy="247.19" r="1.9" fill="#5b9bd5"/><circle cx="736.80" cy="247.20" r="1.9" fill="#5b9bd5"/><circle cx="749.40" cy="247.21" r="1.9" fill="#5b9bd5"/><circle cx="760.60" cy="247.22" r="1.9" fill="#5b9bd5"/><circle cx="778.80" cy="247.24" r="1.9" fill="#5b9bd5"/><circle cx="790.00" cy="247.24" r="1.9" fill="#5b9bd5"/><circle cx="804.50" cy="247.26" r="1.9" fill="#5b9bd5"/><circle cx="815.00" cy="247.26" r="1.9" fill="#5b9bd5"/><circle cx="846.80" cy="247.29" r="1.9" fill="#5b9bd5"/><circle cx="859.20" cy="247.30" r="1.9" fill="#5b9bd5"/><text x="584" y="154.40" font-size="6" text-anchor="end" fill="#595959" font-family="Liberation Sans">450</text><text x="584" y="170.50" font-size="6" text-anchor="end" fill="#595959" font-family="Liberation Sans">400</text><text x="584" y="186.60" font-size="6" text-anchor="end" fill="#595959" font-family="Liberation Sans">350</text><text x="584" y="202.70" font-size="6" text-anchor="end" fill="#595959" font-family="Liberation Sans">300</text><text x="584" y="218.80" font-size="6" text-anchor="end" fill="#595959" font-family="Liberation Sans">250</text><text x="584" y="234.90" font-size="6" text-anchor="end" fill="#595959" font-family="Liberation Sans">200</text><text x="584" y="251.00" font-size="6" text-anchor="end" fill="#595959" font-family="Liberation Sans">150</text><text x="584" y="267.10" font-size="6" text-anchor="end" fill="#595959" font-family="Liberation Sans">100</text><text x="584" y="283.20" font-size="6" text-anchor="end" fill="#595959" font-family="Liberation Sans">50</text><text x="584" y="299.30" font-size="6" text-anchor="end" fill="#595959" font-family="Liberation Sans">0</text><clipPath id="cc"><rect x="569" y="129" width="303" height="203"/></clipPath><g clip-path="url(#cc)"><text x="576.00" y="307" font-size="6.3" textLength="28.4" lengthAdjust="spacingAndGlyphs" fill="#404040" font-family="Liberation Sans">27.12.2014</text><text x="606.15" y="307" font-size="6.3" textLength="28.4" lengthAdjust="spacingAndGlyphs" fill="#404040" font-family="Liberation Sans">15.02.2015</text><text x="636.30" y="307" font-size="6.3" textLength="28.4" lengthAdjust="spacingAndGlyphs" fill="#404040" font-family="Liberation Sans">6.04.2015</text><text x="666.45" y="307" font-size="6.3" textLength="28.4" lengthAdjust="spacingAndGlyphs" fill="#404040" font-family="Liberation Sans">26.05.2015</text><text x="696.60" y="307" font-size="6.3" textLength="28.4" lengthAdjust="spacingAndGlyphs" fill="#404040" font-family="Liberation Sans">15.07.2015</text><text x="726.75" y="307" font-size="6.3" textLength="28.4" lengthAdjust="spacingAndGlyphs" fill="#404040" font-family="Liberation Sans">3.09.2015</text><text x="756.90" y="307" font-size="6.3" textLength="28.4" lengthAdjust="spacingAndGlyphs" fill="#404040" font-family="Liberation Sans">23.10.2015</text><text x="787.05" y="307" font-size="6.3" textLength="28.4" lengthAdjust="spacingAndGlyphs" fill="#404040" font-family="Liberation Sans">12.12.2015</text><text x="817.20" y="307" font-size="6.3" textLength="28.4" lengthAdjust="spacingAndGlyphs" fill="#404040" font-family="Liberation Sans">31.01.2016</text><text x="847.35" y="307" font-size="6.3" textLength="28.4" lengthAdjust="spacingAndGlyphs" fill="#404040" font-family="Liberation Sans">21.03.2016</text></g><text x="740.5" y="141" font-size="8.8" text-anchor="middle" fill="#595959" font-family="Liberation Sans">Naslov grafikona</text><line x1="710.5" y1="320.4" x2="723.4" y2="320.4" stroke="#5b9bd5" stroke-width="1.2"/><circle cx="717" cy="320.4" r="1.5" fill="#5b9bd5"/><text x="727" y="322.5" font-size="5.8" fill="#595959" font-family="Liberation Sans">Nizi1</text><line x1="744.8" y1="320.4" x2="758" y2="320.4" stroke="#ed7d31" stroke-width="1.2"/><circle cx="751.4" cy="320.4" r="1.5" fill="#ed7d31"/><text x="760.4" y="322.5" font-size="5.8" fill="#595959" font-family="Liberation Sans">Nizi2</text><circle cx="740.7" cy="330.8" r="2.2" fill="#fff" stroke="#777" stroke-width="0.7"/></svg><div style="position:absolute;left:568.5px;top:332px;width:38px;height:1.2px;background:#9a7ad8"></div><div style="position:absolute;left:606.5px;top:332px;width:77px;height:1.2px;background:#7aa0d8"></div><div style="position:absolute;left:605.5px;top:331.5px;width:2px;height:2px;background:#7030a0"></div><div style="position:absolute;left:682.6px;top:331.5px;width:2px;height:2px;background:#2050c0"></div><div style="position:absolute;left:552.8px;top:333.6px;width:330.4px;height:14.4px;background:#e6e6e6;border-top:0.7px solid #c8c8c8"></div><div style="position:absolute;left:567px;top:337.8px;white-space:nowrap;font-size:6px;color:#b8b8b8">&#x25C2;</div><div style="position:absolute;left:582px;top:337.8px;white-space:nowrap;font-size:6px;color:#b8b8b8">&#x25B8;</div><div style="position:absolute;left:606.2px;top:333.6px;width:28px;height:14px;background:#fff;border-left:0.6px solid #c8c8c8;border-right:0.6px solid #c8c8c8"></div><div style="position:absolute;left:606.8px;top:346px;width:27px;height:1.3px;background:#217346"></div><div style="position:absolute;left:606.2px;top:337px;white-space:nowrap;font-size:7.2px;color:#217346;font-weight:bold;width:28px;text-align:center">List1</div><svg style="position:absolute;left:651.5px;top:336px" width="9" height="9"><circle cx="4.5" cy="4.5" r="3.9" fill="none" stroke="#666" stroke-width="0.8"/><line x1="2.3" y1="4.5" x2="6.7" y2="4.5" stroke="#666" stroke-width="0.9"/><line x1="4.5" y1="2.3" x2="4.5" y2="6.7" stroke="#666" stroke-width="0.9"/></svg><div style="position:absolute;left:751.5px;top:337.5px;width:0.8px;height:0.8px;background:#999"></div><div style="position:absolute;left:751.5px;top:339.5px;width:0.8px;height:0.8px;background:#999"></div><div style="position:absolute;left:751.5px;top:341.5px;width:0.8px;height:0.8px;background:#999"></div><div style="position:absolute;left:760.5px;top:336.9px;width:112.5px;height:7.4px;background:#dcdcdc;border:0.6px solid #c8c8c8"></div><div style="position:absolute;left:760.5px;top:336.9px;width:7.5px;height:7.4px;background:#fff;border:0.6px solid #c0c0c0"></div><div style="position:absolute;left:768px;top:336.9px;width:61px;height:7.4px;background:#fff;border:0.6px solid #c8c8c8"></div><div style="position:absolute;left:865.5px;top:336.9px;width:7.5px;height:7.4px;background:#fff;border:0.6px solid #c0c0c0"></div><svg style="position:absolute;left:763px;top:338.8px" width="3" height="4"><polygon points="3,0 0,2 3,4" fill="#444"/></svg><svg style="position:absolute;left:868px;top:338.8px" width="3" height="4"><polygon points="0,0 3,2 0,4" fill="#444"/></svg><div style="position:absolute;left:552.8px;top:348px;width:330.4px;height:11.2px;background:#f0f0f0;border-top:0.6px solid #d8d8d8"></div><div style="position:absolute;left:558.5px;top:350.8px;white-space:nowrap;font-size:5.9px;color:#444">Povpre&#x10D;je: 12.01.1939</div><div style="position:absolute;left:625.6px;top:350.8px;white-space:nowrap;font-size:5.9px;color:#444">&#x160;tetje: 189</div><div style="position:absolute;left:662.8px;top:350.8px;white-space:nowrap;font-size:5.9px;color:#444">Vsota: 4.09.9277</div><div style="position:absolute;left:720.5px;top:348.3px;width:19px;height:11px;background:#d6d6d6"></div><svg style="position:absolute;left:726px;top:349.5px" width="8" height="8"><rect x="0.5" y="0.5" width="7" height="7" fill="none" stroke="#555" stroke-width="0.7"/><line x1="0.5" y1="2.8" x2="7.5" y2="2.8" stroke="#555" stroke-width="0.5"/><line x1="0.5" y1="5.2" x2="7.5" y2="5.2" stroke="#555" stroke-width="0.5"/><line x1="2.8" y1="0.5" x2="2.8" y2="7.5" stroke="#555" stroke-width="0.5"/><line x1="5.2" y1="0.5" x2="5.2" y2="7.5" stroke="#555" stroke-width="0.5"/></svg><svg style="position:absolute;left:746px;top:349.5px" width="8" height="8"><rect x="0.5" y="0.5" width="7" height="7" fill="none" stroke="#777" stroke-width="0.7"/><line x1="2.5" y1="0.5" x2="2.5" y2="7.5" stroke="#777" stroke-width="0.5"/><line x1="5.5" y1="0.5" x2="5.5" y2="7.5" stroke="#777" stroke-width="0.5"/></svg><svg style="position:absolute;left:766.5px;top:349.5px" width="8" height="8"><path d="M0.5 0.5 H7.5 V7.5 H0.5 Z M2.5 0.5 V4.5 H5.5 V0.5" fill="none" stroke="#666" stroke-width="0.7"/></svg><div style="position:absolute;left:784px;top:353.3px;width:3px;height:0.8px;background:#555"></div><div style="position:absolute;left:790px;top:353.5px;width:52px;height:0.6px;background:#aaa"></div><div style="position:absolute;left:814.8px;top:350.6px;width:1.6px;height:5.6px;background:#444"></div><div style="position:absolute;left:845.3px;top:353.3px;width:3.5px;height:0.8px;background:#555"></div><div style="position:absolute;left:846.6px;top:351.9px;width:0.8px;height:3.6px;background:#555"></div><div style="position:absolute;left:857.5px;top:350.6px;white-space:nowrap;font-size:6.2px;color:#444">100 %</div></div></body></html>
